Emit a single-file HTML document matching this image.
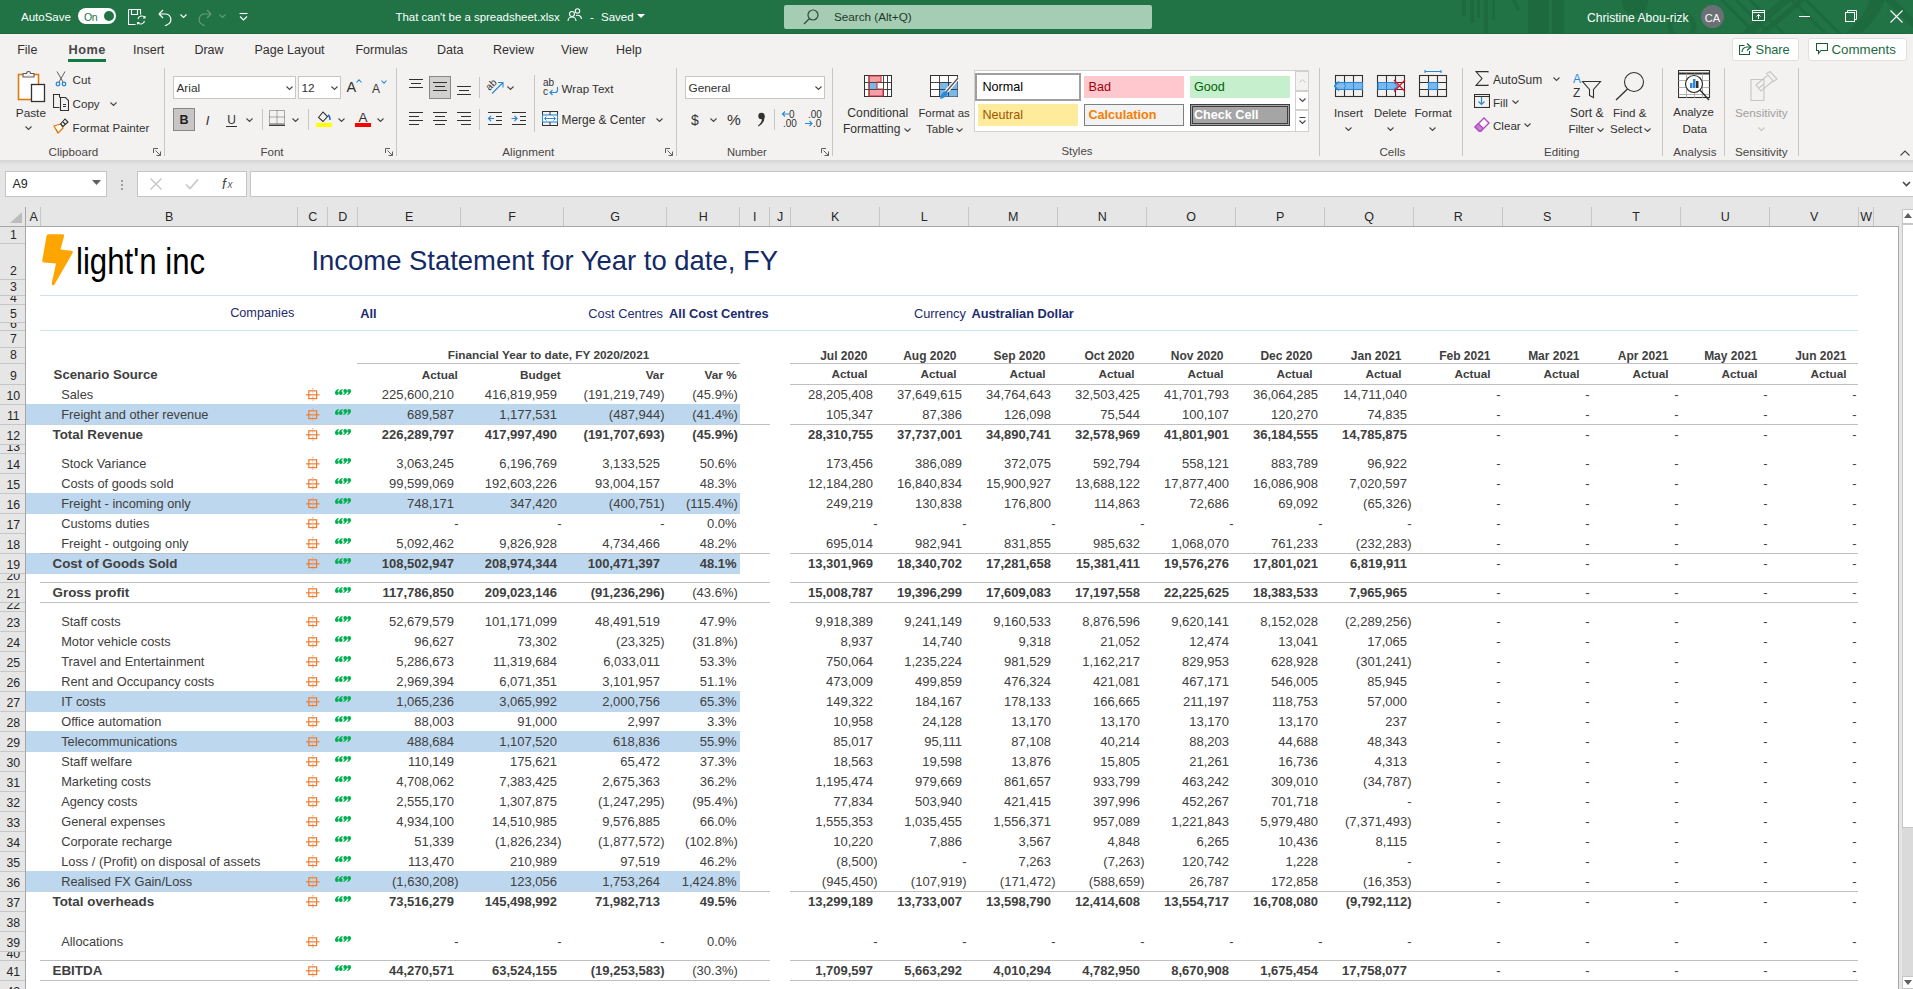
<!DOCTYPE html><html><head><meta charset="utf-8"><style>
html,body{margin:0;padding:0;width:1913px;height:989px;overflow:hidden;background:#fff;}
body{position:relative;font-family:"Liberation Sans",sans-serif;}
.t{position:absolute;white-space:nowrap;line-height:normal;}
.r{position:absolute;box-sizing:border-box;}
</style></head><body>
<div class="r" style="left:0px;top:0px;width:1913px;height:34px;background:#217346;"></div>
<div class="r" style="left:0px;top:33px;width:1913px;height:1px;background:#1b6a3d;"></div>
<svg class="r" style="left:1440px;top:0px" width="473" height="34" viewBox="0 0 473 34">
<g fill="#1e6a3f">
<rect x="22" y="0" width="4" height="16"/><rect x="30" y="0" width="4" height="23"/><rect x="37" y="0" width="3" height="18"/><rect x="44" y="0" width="4" height="33"/><rect x="52" y="0" width="3" height="20"/>
<path d="M72 0 L76 0 L80 10 L77 11Z"/>
<rect x="88" y="0" width="21" height="34"/><rect x="112" y="0" width="12" height="34"/>
<circle cx="195" cy="2" r="13"/>
<path d="M300 34 L340 0 L352 0 L312 34Z"/>
<path d="M318 34 L358 0 L366 0 L326 34Z"/>
<path d="M430 0 L445 0 A80 80 0 0 1 420 34 L404 34 A70 70 0 0 0 430 0Z"/>
<path d="M445 0 L455 0 L473 18 L473 28Z"/>
</g>
<circle cx="242" cy="26" r="12" fill="none" stroke="#1e6a3f" stroke-width="5"/>
<path d="M282 0 L316 34 M296 0 L330 34 M310 0 L344 34 M352 0 L386 34 M366 0 L400 34" stroke="#1e6a3f" stroke-width="3"/>
</svg>
<div class="t" style="top:10.59px;font-size:11.5px;color:#ffffff;left:21.00px;">AutoSave</div>
<div class="r" style="left:78px;top:8px;width:38px;height:16px;background:#fff;border-radius:8px;"></div>
<div class="t" style="top:11.00px;font-size:10.5px;color:#217346;left:84.00px;letter-spacing:-0.3px;">On</div>
<div class="r" style="left:104px;top:11px;width:10px;height:10px;background:#217346;border-radius:5px;"></div>
<svg class="r" style="left:128px;top:9px" width="18" height="17" viewBox="0 0 18 17"><g fill="none" stroke="#fff" stroke-width="1.1"><path d="M0.5 0.5h12v5M0.5 0.5v15h7"/><path d="M3.5 0.5v5h6v-5"/><path d="M10 10a4 4 0 0 1 7 -1.5M17 7v2h-2"/><path d="M16.5 12a4 4 0 0 1 -7 1.5M9.5 15.5v-2h2"/></g></svg>
<svg class="r" style="left:158px;top:9px" width="15" height="17" viewBox="0 0 15 17"><g fill="none" stroke="#fff" stroke-width="1.2"><path d="M1 5 L5 1 M1 5 L5 9 M1 5 H8 A5.5 5.5 0 0 1 9.5 15.5 L7 17"/></g></svg>
<svg class="r" style="left:180px;top:14px" width="7" height="5" viewBox="0 0 7 5"><path d="M0.5 0.5 L3.5 3.5 L6.5 0.5" fill="none" stroke="#fff" stroke-width="1.1"/></svg>
<svg class="r" style="left:197px;top:9px" width="15" height="17" viewBox="0 0 15 17"><g fill="none" stroke="#5c9c78" stroke-width="1.2"><path d="M14 5 L10 1 M14 5 L10 9 M14 5 H7 A5.5 5.5 0 0 0 5.5 15.5 L8 17"/></g></svg>
<svg class="r" style="left:219px;top:14px" width="7" height="5" viewBox="0 0 7 5"><path d="M0.5 0.5 L3.5 3.5 L6.5 0.5" fill="none" stroke="#5c9c78" stroke-width="1.1"/></svg>
<svg class="r" style="left:239px;top:12px" width="9" height="9" viewBox="0 0 9 9"><g fill="none" stroke="#fff" stroke-width="1.1"><path d="M0.5 1.5h8"/><path d="M1 4.5 L4.5 8 L8 4.5"/></g></svg>
<div class="t" style="top:10.64px;font-size:11.45px;color:#ffffff;left:395.50px;">That can&#x27;t be a spreadsheet.xlsx</div>
<svg class="r" style="left:567px;top:8px" width="15" height="13" viewBox="0 0 15 13"><g fill="none" stroke="#fff" stroke-width="1.1"><circle cx="5" cy="6" r="2.5"/><path d="M1 13 A4 4 0 0 1 9 13"/><circle cx="10.5" cy="3" r="2.2"/><path d="M9 7.5 A4 4 0 0 1 14.5 11"/></g></svg>
<div class="t" style="top:10.59px;font-size:11.5px;color:#ffffff;left:590.00px;">-</div>
<div class="t" style="top:10.59px;font-size:11.5px;color:#ffffff;left:601.00px;">Saved</div>
<svg class="r" style="left:637px;top:14px" width="8" height="5" viewBox="0 0 8 5"><path d="M0 0 L8 0 L4 4Z" fill="#fff"/></svg>
<div class="r" style="left:784px;top:5px;width:368px;height:24px;background:#a4cdb3;border-radius:2px;"></div>
<svg class="r" style="left:803px;top:9px" width="16" height="16" viewBox="0 0 16 16"><g fill="none" stroke="#2d4a39" stroke-width="1.2"><circle cx="10" cy="6" r="5"/><path d="M6.5 9.5 L1 15"/></g></svg>
<div class="t" style="top:9.91px;font-size:11.7px;color:#1f3a2a;left:834.00px;">Search (Alt+Q)</div>
<div class="t" style="top:10.55px;font-size:12.1px;color:#ffffff;left:1587.00px;">Christine Abou-rizk</div>
<div class="r" style="left:1701px;top:5px;width:23px;height:23px;background:#6b7074;border-radius:12px;"></div>
<div class="t" style="top:11.54px;font-size:11px;color:#ffffff;left:1712.50px;transform:translateX(-50%);">CA</div>
<svg class="r" style="left:1752px;top:10px" width="13" height="11" viewBox="0 0 13 11"><g fill="none" stroke="#fff" stroke-width="1"><rect x="0.5" y="0.5" width="12" height="10"/><path d="M0.5 2.5h12"/><path d="M6.5 9V4.5M4.5 6.5L6.5 4.5L8.5 6.5"/></g></svg>
<div class="r" style="left:1799px;top:16px;width:11px;height:1px;background:#fff;"></div>
<svg class="r" style="left:1845px;top:10px" width="12" height="12" viewBox="0 0 12 12"><g fill="none" stroke="#fff" stroke-width="1"><rect x="0.5" y="2.5" width="9" height="9"/><path d="M2.5 2.5V0.5h9v9h-2"/></g></svg>
<svg class="r" style="left:1890px;top:10px" width="13" height="13" viewBox="0 0 13 13"><g stroke="#fff" stroke-width="1.1"><path d="M0.5 0.5L12.5 12.5M12.5 0.5L0.5 12.5"/></g></svg>
<div class="r" style="left:0px;top:34px;width:1913px;height:126px;background:#f3f2f1;"></div>
<div class="t" style="top:43.19px;font-size:12.5px;color:#323130;left:17.20px;">File</div>
<div class="t" style="top:43.19px;font-size:12.5px;color:#323130;left:133.00px;">Insert</div>
<div class="t" style="top:43.19px;font-size:12.5px;color:#323130;left:194.40px;">Draw</div>
<div class="t" style="top:43.19px;font-size:12.5px;color:#323130;left:254.40px;">Page Layout</div>
<div class="t" style="top:43.19px;font-size:12.5px;color:#323130;left:355.40px;">Formulas</div>
<div class="t" style="top:43.19px;font-size:12.5px;color:#323130;left:437.00px;">Data</div>
<div class="t" style="top:43.19px;font-size:12.5px;color:#323130;left:493.00px;">Review</div>
<div class="t" style="top:43.19px;font-size:12.5px;color:#323130;left:561.00px;">View</div>
<div class="t" style="top:43.19px;font-size:12.5px;color:#323130;left:616.00px;">Help</div>
<div class="t" style="top:42.51px;font-size:12.7px;color:#484848;font-weight:bold;left:68.50px;letter-spacing:0.5px;">Home</div>
<div class="r" style="left:68px;top:59px;width:38px;height:3px;background:#107c41;"></div>
<div class="r" style="left:1732px;top:38px;width:67px;height:23px;background:#fff;border:1px solid #e1dfdd;border-radius:3px;"></div>
<svg class="r" style="left:1739px;top:42px" width="13" height="13" viewBox="0 0 13 13"><g fill="none" stroke="#185c37" stroke-width="1.1"><path d="M8 1.5 L12 5 L8 8.5"/><path d="M12 5 H8 A5 5 0 0 0 3 10"/><path d="M5.5 3.5 H0.5 V12.5 H10.5 V9"/></g></svg>
<div class="t" style="top:42.42px;font-size:12.8px;color:#1b6b40;left:1755.60px;">Share</div>
<div class="r" style="left:1808px;top:38px;width:99px;height:23px;background:#fff;border:1px solid #e1dfdd;border-radius:3px;"></div>
<svg class="r" style="left:1816px;top:43px" width="12" height="12" viewBox="0 0 12 12"><path d="M0.5 0.5H11.5V7.5H5L2.5 10.5V7.5H0.5Z" fill="none" stroke="#185c37" stroke-width="1.1"/></svg>
<div class="t" style="top:41.96px;font-size:13.3px;color:#1b6b40;left:1831.50px;">Comments</div>
<svg class="r" style="left:17px;top:71px" width="29" height="32" viewBox="0 0 29 32"><rect x="1.5" y="3.5" width="20" height="25" fill="#fff" stroke="#e07b10" stroke-width="1.6"/>
<path d="M6 6 V2.5 H9.5 A2 2 0 0 1 13.5 2.5 H17 V6Z" fill="#f3f2f1" stroke="#605e5c" stroke-width="1.1"/>
<rect x="14.5" y="13.5" width="13" height="17" fill="#fff" stroke="#323130" stroke-width="1.3"/></svg>
<div class="t" style="top:106.32px;font-size:11.8px;color:#323130;left:15.80px;">Paste</div>
<svg class="r" style="left:24.5px;top:126px" width="7" height="4.5" viewBox="0 0 7 4.5"><path d="M0.5 0.5L3.5 3.5L6.5 0.5" fill="none" stroke="#484644" stroke-width="1.1"/></svg>
<svg class="r" style="left:55px;top:71px" width="12" height="16" viewBox="0 0 12 16"><g fill="none" stroke="#605e5c" stroke-width="1"><path d="M2 0.5 L8 11 M10 0.5 L4 11"/></g><g fill="none" stroke="#2b88d8" stroke-width="1.3"><circle cx="3" cy="13" r="1.8"/><circle cx="9" cy="13" r="1.8"/></g></svg>
<div class="t" style="top:73.30px;font-size:11.6px;color:#323130;left:72.60px;">Cut</div>
<svg class="r" style="left:53px;top:94px" width="16" height="17" viewBox="0 0 16 17"><g fill="none" stroke="#323130" stroke-width="1.1"><path d="M6.5 3.5V0.5H0.5V13.5H6.5"/><path d="M7.5 3.5H12.5L15.5 6.5V16.5H7.5Z"/><path d="M10 10.5H13M10 12.5H13"/></g></svg>
<div class="t" style="top:97.00px;font-size:11.6px;color:#323130;left:72.60px;">Copy</div>
<svg class="r" style="left:110.0px;top:101.5px" width="7" height="4.5" viewBox="0 0 7 4.5"><path d="M0.5 0.5L3.5 3.5L6.5 0.5" fill="none" stroke="#484644" stroke-width="1.1"/></svg>
<svg class="r" style="left:53px;top:118px" width="16" height="16" viewBox="0 0 16 16"><path d="M1 8 L8 6 L10 10 L5 15Z" fill="#fff" stroke="#e07b10" stroke-width="1.3"/><path d="M5 15 L3 11" stroke="#e07b10" stroke-width="1.1"/><g fill="none" stroke="#323130" stroke-width="1.1"><path d="M7.5 6 L12 1 L15 4 L10 8.5Z"/><path d="M10 4 L12.5 6.5"/></g></svg>
<div class="t" style="top:121.00px;font-size:11.6px;color:#323130;left:72.60px;">Format Painter</div>
<div class="t" style="top:144.80px;font-size:11.6px;color:#484644;left:48.60px;">Clipboard</div>
<svg class="r" style="left:153px;top:148px" width="9" height="9" viewBox="0 0 9 9"><g fill="none" stroke="#605e5c" stroke-width="1"><path d="M0.5 5V0.5H5"/><path d="M2.5 2.5L7.5 7.5M3.5 7.5H7.5V3.5"/></g></svg>
<div class="r" style="left:164px;top:68px;width:1px;height:88px;background:#c8c6c4;"></div>
<div class="r" style="left:173px;top:76px;width:123px;height:23px;background:#fff;border:1px solid #c8c6c4;"></div>
<div class="t" style="top:81.32px;font-size:11.8px;color:#323130;left:176.50px;">Arial</div>
<svg class="r" style="left:285.5px;top:86px" width="7" height="4.5" viewBox="0 0 7 4.5"><path d="M0.5 0.5L3.5 3.5L6.5 0.5" fill="none" stroke="#484644" stroke-width="1.1"/></svg>
<div class="r" style="left:298px;top:76px;width:43px;height:23px;background:#fff;border:1px solid #c8c6c4;"></div>
<div class="t" style="top:81.32px;font-size:11.8px;color:#323130;left:301.50px;">12</div>
<svg class="r" style="left:330.5px;top:86px" width="7" height="4.5" viewBox="0 0 7 4.5"><path d="M0.5 0.5L3.5 3.5L6.5 0.5" fill="none" stroke="#484644" stroke-width="1.1"/></svg>
<div class="t" style="top:79.38px;font-size:14.5px;color:#323130;left:346.50px;">A</div>
<svg class="r" style="left:356px;top:79px" width="6" height="4" viewBox="0 0 6 4"><path d="M0.5 3.5L3 0.8L5.5 3.5" fill="none" stroke="#2b88d8" stroke-width="1.1"/></svg>
<div class="t" style="top:81.64px;font-size:12px;color:#323130;left:372.00px;">A</div>
<svg class="r" style="left:381px;top:80px" width="6" height="4" viewBox="0 0 6 4"><path d="M0.5 0.5L3 3.2L5.5 0.5" fill="none" stroke="#2b88d8" stroke-width="1.1"/></svg>
<div class="r" style="left:173px;top:108px;width:22px;height:23px;background:#c8c6c4;border:1px solid #8a8886;"></div>
<div class="t" style="top:113.19px;font-size:12.5px;color:#201f1e;font-weight:bold;left:184.00px;transform:translateX(-50%);">B</div>
<div class="t" style="top:112.73px;font-size:13px;color:#323130;left:207.50px;transform:translateX(-50%);font-style:italic;font-family:"Liberation Serif",serif;">I</div>
<div class="t" style="top:112.64px;font-size:12px;color:#323130;left:231.50px;transform:translateX(-50%);">U</div>
<div class="r" style="left:226px;top:125.5px;width:11px;height:1px;background:#323130;"></div>
<svg class="r" style="left:245.8px;top:117.5px" width="7" height="4.5" viewBox="0 0 7 4.5"><path d="M0.5 0.5L3.5 3.5L6.5 0.5" fill="none" stroke="#484644" stroke-width="1.1"/></svg>
<div class="r" style="left:262px;top:109px;width:1px;height:21px;background:#c8c6c4;"></div>
<svg class="r" style="left:269px;top:110px" width="17" height="16" viewBox="0 0 17 16"><g fill="none" stroke="#605e5c" stroke-width="1" stroke-dasharray="1 1"><rect x="0.5" y="0.5" width="15" height="13"/><path d="M8 0.5V13.5M0.5 7H15.5"/></g><path d="M0 15.2H16" stroke="#201f1e" stroke-width="1.3"/></svg>
<svg class="r" style="left:292.0px;top:117.5px" width="7" height="4.5" viewBox="0 0 7 4.5"><path d="M0.5 0.5L3.5 3.5L6.5 0.5" fill="none" stroke="#484644" stroke-width="1.1"/></svg>
<div class="r" style="left:308px;top:109px;width:1px;height:21px;background:#c8c6c4;"></div>
<svg class="r" style="left:316px;top:110px" width="17" height="17" viewBox="0 0 17 17"><path d="M2.5 7.5 L7 2 L11.5 6.5 L7 11.5Z" fill="none" stroke="#323130" stroke-width="1.1"/><path d="M12 5 Q14 6 14 10" fill="none" stroke="#0f6cbd" stroke-width="1.4"/><rect x="0" y="13" width="16" height="4" fill="#ffff00"/></svg>
<svg class="r" style="left:338.0px;top:117.5px" width="7" height="4.5" viewBox="0 0 7 4.5"><path d="M0.5 0.5L3.5 3.5L6.5 0.5" fill="none" stroke="#484644" stroke-width="1.1"/></svg>
<div class="t" style="top:109.78px;font-size:13.5px;color:#323130;left:363.00px;transform:translateX(-50%);">A</div>
<div class="r" style="left:355px;top:123px;width:16px;height:4px;background:#ff0000;"></div>
<svg class="r" style="left:377.0px;top:117.5px" width="7" height="4.5" viewBox="0 0 7 4.5"><path d="M0.5 0.5L3.5 3.5L6.5 0.5" fill="none" stroke="#484644" stroke-width="1.1"/></svg>
<div class="t" style="top:144.80px;font-size:11.6px;color:#484644;left:260.40px;">Font</div>
<svg class="r" style="left:385px;top:148px" width="9" height="9" viewBox="0 0 9 9"><g fill="none" stroke="#605e5c" stroke-width="1"><path d="M0.5 5V0.5H5"/><path d="M2.5 2.5L7.5 7.5M3.5 7.5H7.5V3.5"/></g></svg>
<div class="r" style="left:396px;top:68px;width:1px;height:88px;background:#c8c6c4;"></div>
<div class="r" style="left:409px;top:79px;width:14px;height:1px;background:#323130;"></div>
<div class="r" style="left:411px;top:83px;width:10px;height:1px;background:#323130;"></div>
<div class="r" style="left:409px;top:87px;width:14px;height:1px;background:#323130;"></div>
<div class="r" style="left:429px;top:76px;width:22px;height:23px;background:#d2d0ce;border:1px solid #8a8886;"></div>
<div class="r" style="left:433px;top:82px;width:14px;height:1px;background:#323130;"></div>
<div class="r" style="left:435px;top:86px;width:10px;height:1px;background:#323130;"></div>
<div class="r" style="left:433px;top:90px;width:14px;height:1px;background:#323130;"></div>
<div class="r" style="left:457px;top:86px;width:14px;height:1px;background:#323130;"></div>
<div class="r" style="left:459px;top:90px;width:10px;height:1px;background:#323130;"></div>
<div class="r" style="left:457px;top:94px;width:14px;height:1px;background:#323130;"></div>
<div class="r" style="left:479px;top:77px;width:1px;height:21px;background:#c8c6c4;"></div>
<svg class="r" style="left:486px;top:78px" width="19" height="17" viewBox="0 0 19 17"><text x="0" y="0" font-family="Liberation Sans" font-size="10" fill="#323130" transform="translate(3.5 13) rotate(-45)">ab</text><path d="M6 15.5 L16.5 5 M12 4.5 H17 V9.5" fill="none" stroke="#2b88d8" stroke-width="1.1"/></svg>
<svg class="r" style="left:507.0px;top:85.5px" width="7" height="4.5" viewBox="0 0 7 4.5"><path d="M0.5 0.5L3.5 3.5L6.5 0.5" fill="none" stroke="#484644" stroke-width="1.1"/></svg>
<div class="r" style="left:409px;top:112px;width:14px;height:1px;background:#323130;"></div>
<div class="r" style="left:409px;top:116px;width:10px;height:1px;background:#323130;"></div>
<div class="r" style="left:409px;top:120px;width:14px;height:1px;background:#323130;"></div>
<div class="r" style="left:409px;top:124px;width:10px;height:1px;background:#323130;"></div>
<div class="r" style="left:433px;top:112px;width:14px;height:1px;background:#323130;"></div>
<div class="r" style="left:435px;top:116px;width:10px;height:1px;background:#323130;"></div>
<div class="r" style="left:433px;top:120px;width:14px;height:1px;background:#323130;"></div>
<div class="r" style="left:435px;top:124px;width:10px;height:1px;background:#323130;"></div>
<div class="r" style="left:457px;top:112px;width:14px;height:1px;background:#323130;"></div>
<div class="r" style="left:461px;top:116px;width:10px;height:1px;background:#323130;"></div>
<div class="r" style="left:457px;top:120px;width:14px;height:1px;background:#323130;"></div>
<div class="r" style="left:461px;top:124px;width:10px;height:1px;background:#323130;"></div>
<div class="r" style="left:479px;top:109px;width:1px;height:21px;background:#c8c6c4;"></div>
<div class="r" style="left:488px;top:112px;width:14px;height:1px;background:#323130;"></div>
<div class="r" style="left:496px;top:116px;width:6px;height:1px;background:#323130;"></div>
<div class="r" style="left:496px;top:120px;width:6px;height:1px;background:#323130;"></div>
<div class="r" style="left:488px;top:124px;width:14px;height:1px;background:#323130;"></div>
<svg class="r" style="left:487px;top:114px" width="8" height="9" viewBox="0 0 8 9"><path d="M7 4.5H1.5M4 2L1.5 4.5L4 7" fill="none" stroke="#2b88d8" stroke-width="1.2"/></svg>
<div class="r" style="left:512px;top:112px;width:14px;height:1px;background:#323130;"></div>
<div class="r" style="left:520px;top:116px;width:6px;height:1px;background:#323130;"></div>
<div class="r" style="left:520px;top:120px;width:6px;height:1px;background:#323130;"></div>
<div class="r" style="left:512px;top:124px;width:14px;height:1px;background:#323130;"></div>
<svg class="r" style="left:511px;top:114px" width="8" height="9" viewBox="0 0 8 9"><path d="M0.5 4.5H6M3.5 2L6 4.5L3.5 7" fill="none" stroke="#2b88d8" stroke-width="1.2"/></svg>
<div class="r" style="left:534px;top:75px;width:1px;height:57px;background:#c8c6c4;"></div>
<svg class="r" style="left:543px;top:78px" width="17" height="18" viewBox="0 0 17 18"><text x="0" y="8" font-family="Liberation Sans" font-size="10" fill="#323130">ab</text><text x="0" y="17" font-family="Liberation Sans" font-size="10" fill="#323130">c</text><path d="M14.5 9 V12 A2.5 2.5 0 0 1 12 14.5 H7 M9.5 12 L7 14.5 L9.5 17" fill="none" stroke="#2b88d8" stroke-width="1.2"/></svg>
<div class="t" style="top:82.00px;font-size:11.6px;color:#323130;left:561.60px;">Wrap Text</div>
<svg class="r" style="left:542px;top:111px" width="16" height="15" viewBox="0 0 16 15"><rect x="0.5" y="0.5" width="15" height="14" fill="none" stroke="#323130" stroke-width="1"/><rect x="0.5" y="4" width="15" height="7" fill="#fff" stroke="#2b88d8" stroke-width="1.1"/><path d="M2.5 7.5H13.5M4.5 5.5L2.5 7.5L4.5 9.5M11.5 5.5L13.5 7.5L11.5 9.5" fill="none" stroke="#2b88d8" stroke-width="1"/><path d="M8 0.5V4M8 11V14.5" stroke="#323130"/></svg>
<div class="t" style="top:113.23px;font-size:11.9px;color:#323130;left:561.60px;">Merge &amp; Center</div>
<svg class="r" style="left:656.0px;top:117.5px" width="7" height="4.5" viewBox="0 0 7 4.5"><path d="M0.5 0.5L3.5 3.5L6.5 0.5" fill="none" stroke="#484644" stroke-width="1.1"/></svg>
<div class="t" style="top:144.71px;font-size:11.7px;color:#484644;left:502.30px;">Alignment</div>
<svg class="r" style="left:665px;top:148px" width="9" height="9" viewBox="0 0 9 9"><g fill="none" stroke="#605e5c" stroke-width="1"><path d="M0.5 5V0.5H5"/><path d="M2.5 2.5L7.5 7.5M3.5 7.5H7.5V3.5"/></g></svg>
<div class="r" style="left:676px;top:68px;width:1px;height:88px;background:#c8c6c4;"></div>
<div class="r" style="left:685px;top:76px;width:140px;height:23px;background:#fff;border:1px solid #c8c6c4;"></div>
<div class="t" style="top:81.32px;font-size:11.8px;color:#323130;left:688.50px;">General</div>
<svg class="r" style="left:814.5px;top:86px" width="7" height="4.5" viewBox="0 0 7 4.5"><path d="M0.5 0.5L3.5 3.5L6.5 0.5" fill="none" stroke="#484644" stroke-width="1.1"/></svg>
<div class="t" style="top:112.33px;font-size:14px;color:#323130;left:691.00px;">$</div>
<svg class="r" style="left:710.0px;top:117.5px" width="7" height="4.5" viewBox="0 0 7 4.5"><path d="M0.5 0.5L3.5 3.5L6.5 0.5" fill="none" stroke="#484644" stroke-width="1.1"/></svg>
<div class="t" style="top:110.97px;font-size:15.5px;color:#323130;left:727.00px;">%</div>
<svg class="r" style="left:757px;top:112px" width="9" height="15" viewBox="0 0 9 15"><circle cx="4.5" cy="4" r="3.2" fill="#323130"/><path d="M7.6 4 Q8 11 1.5 14.5 L1 13.5 Q5 10.5 5 6.5Z" fill="#323130"/></svg>
<div class="r" style="left:774px;top:109px;width:1px;height:21px;background:#c8c6c4;"></div>
<svg class="r" style="left:781px;top:109px" width="17" height="19" viewBox="0 0 17 19"><text x="8" y="9" font-family="Liberation Sans" font-size="10" fill="#323130">0</text><text x="2" y="18" font-family="Liberation Sans" font-size="10" fill="#323130">.00</text><path d="M8 5H1.5M4 2.5L1.5 5L4 7.5" fill="none" stroke="#2b88d8" stroke-width="1.1"/></svg>
<svg class="r" style="left:804px;top:109px" width="19" height="19" viewBox="0 0 19 19"><text x="4" y="9" font-family="Liberation Sans" font-size="10" fill="#323130">.00</text><text x="9" y="18" font-family="Liberation Sans" font-size="10" fill="#323130">.0</text><path d="M1 14.5H8M5.5 12L8 14.5L5.5 17" fill="none" stroke="#2b88d8" stroke-width="1.1"/></svg>
<div class="t" style="top:145.86px;font-size:11.2px;color:#484644;left:727.00px;">Number</div>
<svg class="r" style="left:821px;top:148px" width="9" height="9" viewBox="0 0 9 9"><g fill="none" stroke="#605e5c" stroke-width="1"><path d="M0.5 5V0.5H5"/><path d="M2.5 2.5L7.5 7.5M3.5 7.5H7.5V3.5"/></g></svg>
<div class="r" style="left:832px;top:68px;width:1px;height:88px;background:#c8c6c4;"></div>
<svg class="r" style="left:864px;top:75px" width="28" height="22" viewBox="0 0 28 22"><rect x="0.5" y="0.5" width="27" height="21" fill="#fff" stroke="#323130" stroke-width="1"/>
<rect x="5" y="1" width="12" height="6" fill="#f4a0a8"/><rect x="5" y="8" width="8" height="6" fill="#7ab8ea"/><rect x="5" y="15" width="14" height="6" fill="#f4a0a8"/>
<path d="M0.5 7.5H27.5M0.5 14.5H27.5M5 0.5V21.5M19.5 0.5V21.5M23.5 0.5V21.5" stroke="#323130" stroke-width="0.9"/>
<path d="M5 1H17V7H13V14H19V21H5Z" fill="none" stroke="#d13438" stroke-width="1.1"/></svg>
<div class="t" style="top:106.46px;font-size:12.2px;color:#323130;left:847.30px;">Conditional</div>
<div class="t" style="top:121.94px;font-size:12.0px;color:#323130;left:843.00px;">Formatting</div>
<svg class="r" style="left:903.5px;top:127.5px" width="7" height="4.5" viewBox="0 0 7 4.5"><path d="M0.5 0.5L3.5 3.5L6.5 0.5" fill="none" stroke="#484644" stroke-width="1.1"/></svg>
<svg class="r" style="left:930px;top:75px" width="30" height="25" viewBox="0 0 30 25"><rect x="0.5" y="0.5" width="27" height="21" fill="#fff" stroke="#323130" stroke-width="1"/>
<rect x="10" y="7" width="17.5" height="14.5" fill="#7ab8ea"/>
<path d="M0.5 7.5H27.5M0.5 14.5H27.5M9.5 0.5V21.5M18.5 0.5V21.5" stroke="#323130" stroke-width="0.9"/>
<path d="M28 3 L16 17" stroke="#fff" stroke-width="4"/><path d="M28 3 L16 17" stroke="#605e5c" stroke-width="1.5"/>
<path d="M16 16 Q11 17 10 24 Q16 23 18 18Z" fill="#2b88d8"/></svg>
<div class="t" style="top:107.18px;font-size:11.4px;color:#323130;left:918.40px;">Format as</div>
<div class="t" style="top:122.30px;font-size:11.6px;color:#323130;left:926.00px;">Table</div>
<svg class="r" style="left:955.5px;top:127.5px" width="7" height="4.5" viewBox="0 0 7 4.5"><path d="M0.5 0.5L3.5 3.5L6.5 0.5" fill="none" stroke="#484644" stroke-width="1.1"/></svg>
<div class="r" style="left:974px;top:70px;width:335px;height:62px;background:#fff;border:1px solid #d2d0ce;"></div>
<div class="r" style="left:975px;top:73px;width:106px;height:28px;background:#fff;border:2px solid #a19f9d;"></div>
<div class="t" style="top:79.60px;font-size:12.6px;color:#000000;left:982.50px;">Normal</div>
<div class="r" style="left:1084px;top:76px;width:100px;height:22px;background:#ffc7ce;"></div>
<div class="t" style="top:79.60px;font-size:12.6px;color:#9c0006;left:1088.50px;">Bad</div>
<div class="r" style="left:1190px;top:76px;width:100px;height:22px;background:#c6efce;"></div>
<div class="t" style="top:79.60px;font-size:12.6px;color:#006100;left:1194.00px;">Good</div>
<div class="r" style="left:978px;top:104px;width:100px;height:22px;background:#ffeb9c;"></div>
<div class="t" style="top:107.60px;font-size:12.6px;color:#9c5700;left:982.50px;">Neutral</div>
<div class="r" style="left:1084px;top:104px;width:100px;height:22px;background:#f2f2f2;border:1px solid #7f7f7f;"></div>
<div class="t" style="top:107.60px;font-size:12.6px;color:#fa7d00;font-weight:bold;left:1088.50px;">Calculation</div>
<div class="r" style="left:1190px;top:104px;width:100px;height:22px;background:#a5a5a5;border:3px double #3f3f3f;"></div>
<div class="t" style="top:107.60px;font-size:12.6px;color:#ffffff;font-weight:bold;left:1194.00px;">Check Cell</div>
<div class="r" style="left:1295px;top:71px;width:14px;height:20px;background:#f3f2f1;border:1px solid #d2d0ce;"></div>
<svg class="r" style="left:1299px;top:79px" width="7" height="4" viewBox="0 0 7 4"><path d="M0.5 3.5L3.5 0.5L6.5 3.5" fill="none" stroke="#c8c6c4" stroke-width="1"/></svg>
<div class="r" style="left:1295px;top:91px;width:14px;height:19px;background:#fff;border:1px solid #d2d0ce;"></div>
<svg class="r" style="left:1298.5px;top:98px" width="7" height="4.5" viewBox="0 0 7 4.5"><path d="M0.5 0.5L3.5 3.5L6.5 0.5" fill="none" stroke="#484644" stroke-width="1.1"/></svg>
<div class="r" style="left:1295px;top:110px;width:14px;height:22px;background:#fff;border:1px solid #d2d0ce;"></div>
<svg class="r" style="left:1298.5px;top:117px" width="7" height="8" viewBox="0 0 7 8"><path d="M0.5 0.5H6.5M0.5 3.5L3.5 6.5L6.5 3.5" fill="none" stroke="#484644" stroke-width="1.1"/></svg>
<div class="t" style="top:144.98px;font-size:11.4px;color:#484644;left:1061.40px;">Styles</div>
<div class="r" style="left:1319px;top:68px;width:1px;height:88px;background:#c8c6c4;"></div>
<svg class="r" style="left:1334px;top:70px" width="30" height="28" viewBox="0 0 30 28"><g fill="none" stroke="#323130" stroke-width="1.1"><rect x="1.5" y="5.5" width="27" height="21"/><path d="M1.5 12.5H28.5M1.5 19.5H28.5M10.5 5.5V26.5M19.5 5.5V26.5"/></g><rect x="2" y="12.5" width="26.5" height="7" fill="#7ab8ea" stroke="#2b88d8" stroke-width="1.1"/><path d="M10.5 12.5V19.5M19.5 12.5V19.5" stroke="#2b88d8"/><path d="M0.5 16H12M5 11.5L0.5 16L5 20.5" fill="none" stroke="#2b88d8" stroke-width="1.4"/><path d="M2 16H11" stroke="#fff" stroke-width="0.8"/></svg>
<div class="t" style="top:106.30px;font-size:11.6px;color:#323130;left:1334.00px;">Insert</div>
<svg class="r" style="left:1345.0px;top:126.5px" width="7" height="4.5" viewBox="0 0 7 4.5"><path d="M0.5 0.5L3.5 3.5L6.5 0.5" fill="none" stroke="#484644" stroke-width="1.1"/></svg>
<svg class="r" style="left:1376px;top:70px" width="30" height="28" viewBox="0 0 30 28"><g fill="none" stroke="#323130" stroke-width="1.1"><rect x="1.5" y="5.5" width="27" height="21"/><path d="M1.5 12.5H28.5M1.5 19.5H28.5M10.5 5.5V26.5M19.5 5.5V26.5"/></g><path d="M2 12.5H18L22 16L18 19.5H2Z" fill="#7ab8ea" stroke="#2b88d8" stroke-width="1.1"/><path d="M10.5 12.5V19.5" stroke="#2b88d8"/><path d="M18 10 L29 21.5 M29 10 L18 21.5" stroke="#e81123" stroke-width="1.2"/></svg>
<div class="t" style="top:106.57px;font-size:11.3px;color:#323130;left:1374.00px;">Delete</div>
<svg class="r" style="left:1387.0px;top:126.5px" width="7" height="4.5" viewBox="0 0 7 4.5"><path d="M0.5 0.5L3.5 3.5L6.5 0.5" fill="none" stroke="#484644" stroke-width="1.1"/></svg>
<svg class="r" style="left:1418px;top:70px" width="30" height="28" viewBox="0 0 30 28"><g fill="none" stroke="#323130" stroke-width="1.1"><rect x="1.5" y="5.5" width="27" height="21"/><path d="M1.5 12.5H28.5M1.5 19.5H28.5M10.5 5.5V26.5M19.5 5.5V26.5"/></g><rect x="10.5" y="12.5" width="9" height="7" fill="#7ab8ea" stroke="#2b88d8" stroke-width="1.1"/><path d="M7 1.5H23M7 0V3M23 0V3" stroke="#2b88d8" stroke-width="1.1"/></svg>
<div class="t" style="top:106.12px;font-size:11.8px;color:#323130;left:1414.40px;">Format</div>
<svg class="r" style="left:1429.0px;top:126.5px" width="7" height="4.5" viewBox="0 0 7 4.5"><path d="M0.5 0.5L3.5 3.5L6.5 0.5" fill="none" stroke="#484644" stroke-width="1.1"/></svg>
<div class="t" style="top:144.80px;font-size:11.6px;color:#484644;left:1379.50px;">Cells</div>
<div class="r" style="left:1462px;top:68px;width:1px;height:88px;background:#c8c6c4;"></div>
<svg class="r" style="left:1475px;top:71px" width="14" height="15" viewBox="0 0 14 15"><path d="M13 1.5V0.6H1L7 7.5L1 14.4H13V13.5" fill="none" stroke="#323130" stroke-width="1.1"/></svg>
<div class="t" style="top:72.64px;font-size:12.0px;color:#323130;left:1492.90px;">AutoSum</div>
<svg class="r" style="left:1552.9px;top:77px" width="7" height="4.5" viewBox="0 0 7 4.5"><path d="M0.5 0.5L3.5 3.5L6.5 0.5" fill="none" stroke="#484644" stroke-width="1.1"/></svg>
<svg class="r" style="left:1474px;top:94px" width="16" height="14" viewBox="0 0 16 14"><rect x="0.5" y="0.5" width="15" height="13" fill="none" stroke="#323130" stroke-width="1.1"/><path d="M0.5 2.5H15.5" stroke="#323130" stroke-width="1"/><path d="M7.5 3V10.5M4.5 7.5L7.5 10.5L10.5 7.5" fill="none" stroke="#2b88d8" stroke-width="1.2"/></svg>
<div class="t" style="top:95.50px;font-size:11.6px;color:#323130;left:1493.00px;">Fill</div>
<svg class="r" style="left:1511.5px;top:99.5px" width="7" height="4.5" viewBox="0 0 7 4.5"><path d="M0.5 0.5L3.5 3.5L6.5 0.5" fill="none" stroke="#484644" stroke-width="1.1"/></svg>
<svg class="r" style="left:1474px;top:116px" width="16" height="16" viewBox="0 0 16 16"><path d="M1 11 L10 2 L15 7 L6 16Z" fill="#fff" stroke="#b146c2" stroke-width="1.3"/><path d="M1 11L4.5 7.5L9.5 12.5L6 16Z" fill="#c77fd2" stroke="#b146c2" stroke-width="1.1"/></svg>
<div class="t" style="top:119.00px;font-size:11.6px;color:#323130;left:1493.00px;">Clear</div>
<svg class="r" style="left:1523.5px;top:122.5px" width="7" height="4.5" viewBox="0 0 7 4.5"><path d="M0.5 0.5L3.5 3.5L6.5 0.5" fill="none" stroke="#484644" stroke-width="1.1"/></svg>
<svg class="r" style="left:1572px;top:72px" width="30" height="28" viewBox="0 0 30 28"><text x="1" y="11" font-family="Liberation Sans" font-size="12" fill="#2b88d8">A</text><text x="1" y="25" font-family="Liberation Sans" font-size="12" fill="#323130">Z</text><path d="M10.5 9.5H28.5L21.5 17.5V25.5L17.5 23.5V17.5Z" fill="none" stroke="#323130" stroke-width="1.1"/></svg>
<div class="t" style="top:105.85px;font-size:12.1px;color:#323130;left:1570.00px;">Sort &amp;</div>
<div class="t" style="top:122.00px;font-size:11.6px;color:#323130;left:1568.40px;">Filter</div>
<svg class="r" style="left:1596.5px;top:127.5px" width="7" height="4.5" viewBox="0 0 7 4.5"><path d="M0.5 0.5L3.5 3.5L6.5 0.5" fill="none" stroke="#484644" stroke-width="1.1"/></svg>
<svg class="r" style="left:1615px;top:71px" width="31" height="30" viewBox="0 0 31 30"><circle cx="19" cy="11" r="9.5" fill="none" stroke="#323130" stroke-width="1.1"/><path d="M12.5 18 L1 29" stroke="#323130" stroke-width="1.3"/></svg>
<div class="t" style="top:106.30px;font-size:11.6px;color:#323130;left:1613.00px;">Find &amp;</div>
<div class="t" style="top:122.00px;font-size:11.6px;color:#323130;left:1610.00px;">Select</div>
<svg class="r" style="left:1643.5px;top:127.5px" width="7" height="4.5" viewBox="0 0 7 4.5"><path d="M0.5 0.5L3.5 3.5L6.5 0.5" fill="none" stroke="#484644" stroke-width="1.1"/></svg>
<div class="t" style="top:144.80px;font-size:11.6px;color:#484644;left:1544.00px;">Editing</div>
<div class="r" style="left:1662px;top:68px;width:1px;height:88px;background:#c8c6c4;"></div>
<svg class="r" style="left:1678px;top:70px" width="33" height="32" viewBox="0 0 33 32"><rect x="0.5" y="0.5" width="31" height="27" fill="#fff" stroke="#323130" stroke-width="1.1"/>
<path d="M0.5 3.5H31.5" stroke="#323130" stroke-width="2"/>
<path d="M0.5 10.5H31.5M0.5 17.5H31.5M0.5 24.5H31.5M8.5 3.5V28M16.5 3.5V28M24.5 3.5V28" stroke="#a19f9d" stroke-width="0.8"/>
<circle cx="16" cy="14" r="8.5" fill="#fff" stroke="#323130" stroke-width="1.2"/>
<rect x="12" y="13" width="2.5" height="5" fill="#2b88d8"/><rect x="15" y="9" width="2.5" height="9" fill="#2b88d8"/><rect x="18" y="11" width="2.5" height="7" fill="#323130"/>
<path d="M22 20 L31 30" stroke="#323130" stroke-width="1.5"/></svg>
<div class="t" style="top:106.48px;font-size:11.4px;color:#323130;left:1673.30px;">Analyze</div>
<div class="t" style="top:122.30px;font-size:11.6px;color:#323130;left:1682.40px;">Data</div>
<div class="t" style="top:144.80px;font-size:11.6px;color:#484644;left:1673.30px;">Analysis</div>
<div class="r" style="left:1724px;top:68px;width:1px;height:88px;background:#c8c6c4;"></div>
<svg class="r" style="left:1750px;top:71px" width="28" height="30" viewBox="0 0 28 30"><g fill="none" stroke="#c8c6c4" stroke-width="1.1"><path d="M1 8.5H14V29.5H1Z"/><path d="M6 14 L18 4 L23 10 L11 20Z"/><path d="M16 3 L20 0.5 L27 8 L23 11"/><path d="M9 17 L14 13"/></g></svg>
<div class="t" style="top:106.21px;font-size:11.7px;color:#a19f9d;left:1735.00px;">Sensitivity</div>
<svg class="r" style="left:1757.5px;top:126.5px" width="7" height="4.5" viewBox="0 0 7 4.5"><path d="M0.5 0.5L3.5 3.5L6.5 0.5" fill="none" stroke="#c8c6c4" stroke-width="1.1"/></svg>
<div class="t" style="top:144.71px;font-size:11.7px;color:#484644;left:1735.00px;">Sensitivity</div>
<div class="r" style="left:1798px;top:68px;width:1px;height:88px;background:#c8c6c4;"></div>
<svg class="r" style="left:1900px;top:150px" width="10" height="6" viewBox="0 0 10 6"><path d="M0.5 5.5L5 1L9.5 5.5" fill="none" stroke="#484644" stroke-width="1.1"/></svg>
<div class="r" style="left:0px;top:160px;width:1913px;height:47px;background:#e6e6e6;"></div>
<div class="r" style="left:0px;top:160px;width:1913px;height:5px;background:linear-gradient(#d4d4d4,#e6e6e6);"></div>
<div class="r" style="left:5px;top:171px;width:102px;height:26px;background:#fff;border:1px solid #c6c6c6;"></div>
<div class="t" style="top:176.69px;font-size:12.5px;color:#262626;left:12.50px;">A9</div>
<svg class="r" style="left:92px;top:180px" width="9" height="5" viewBox="0 0 9 5"><path d="M0 0H9L4.5 5Z" fill="#605e5c"/></svg>
<div class="r" style="left:121px;top:180px;width:2px;height:2px;background:#a19f9d;"></div>
<div class="r" style="left:121px;top:184px;width:2px;height:2px;background:#a19f9d;"></div>
<div class="r" style="left:121px;top:188px;width:2px;height:2px;background:#a19f9d;"></div>
<div class="r" style="left:137px;top:171px;width:110px;height:26px;background:#fff;border:1px solid #c6c6c6;"></div>
<svg class="r" style="left:150px;top:178px" width="12" height="12" viewBox="0 0 12 12"><path d="M0.5 0.5L11.5 11.5M11.5 0.5L0.5 11.5" stroke="#c8c6c4" stroke-width="1.4"/></svg>
<svg class="r" style="left:185px;top:178px" width="14" height="12" viewBox="0 0 14 12"><path d="M1 6.5L5 10.5L13 1.5" fill="none" stroke="#c8c6c4" stroke-width="1.6"/></svg>
<div class="t" style="top:175.83px;font-size:14px;color:#484644;left:222.00px;font-style:italic;font-family:"Liberation Serif",serif;font-weight:bold;">f</div>
<div class="t" style="top:179.45px;font-size:10px;color:#605e5c;left:227.50px;font-style:italic;font-family:"Liberation Serif",serif;font-weight:bold;">x</div>
<div class="r" style="left:250px;top:171px;width:1663px;height:26px;background:#fff;border:1px solid #c6c6c6;border-right:none;"></div>
<svg class="r" style="left:1902px;top:181px" width="9" height="6" viewBox="0 0 9 6"><path d="M1 1L4.5 4.5L8 1" fill="none" stroke="#484644" stroke-width="1.6"/></svg>
<div class="r" style="left:0px;top:207px;width:1899px;height:19px;background:#e6e6e6;"></div>
<div class="r" style="left:1873px;top:207px;width:26px;height:19px;background:#e6e6e6;"></div>
<div class="t" style="top:209.69px;font-size:12.5px;color:#262626;left:33.70px;transform:translateX(-50%);">A</div>
<div class="r" style="left:40px;top:207px;width:1px;height:19px;background:#c6c6c6;"></div>
<div class="t" style="top:209.69px;font-size:12.5px;color:#262626;left:169.20px;transform:translateX(-50%);">B</div>
<div class="r" style="left:297px;top:207px;width:1px;height:19px;background:#c6c6c6;"></div>
<div class="t" style="top:209.69px;font-size:12.5px;color:#262626;left:312.70px;transform:translateX(-50%);">C</div>
<div class="r" style="left:327px;top:207px;width:1px;height:19px;background:#c6c6c6;"></div>
<div class="t" style="top:209.69px;font-size:12.5px;color:#262626;left:342.70px;transform:translateX(-50%);">D</div>
<div class="r" style="left:357px;top:207px;width:1px;height:19px;background:#c6c6c6;"></div>
<div class="t" style="top:209.69px;font-size:12.5px;color:#262626;left:409.20px;transform:translateX(-50%);">E</div>
<div class="r" style="left:460px;top:207px;width:1px;height:19px;background:#c6c6c6;"></div>
<div class="t" style="top:209.69px;font-size:12.5px;color:#262626;left:512.20px;transform:translateX(-50%);">F</div>
<div class="r" style="left:563px;top:207px;width:1px;height:19px;background:#c6c6c6;"></div>
<div class="t" style="top:209.69px;font-size:12.5px;color:#262626;left:615.20px;transform:translateX(-50%);">G</div>
<div class="r" style="left:666px;top:207px;width:1px;height:19px;background:#c6c6c6;"></div>
<div class="t" style="top:209.69px;font-size:12.5px;color:#262626;left:703.20px;transform:translateX(-50%);">H</div>
<div class="r" style="left:739px;top:207px;width:1px;height:19px;background:#c6c6c6;"></div>
<div class="t" style="top:209.69px;font-size:12.5px;color:#262626;left:754.70px;transform:translateX(-50%);">I</div>
<div class="r" style="left:769px;top:207px;width:1px;height:19px;background:#c6c6c6;"></div>
<div class="t" style="top:209.69px;font-size:12.5px;color:#262626;left:780.20px;transform:translateX(-50%);">J</div>
<div class="r" style="left:790px;top:207px;width:1px;height:19px;background:#c6c6c6;"></div>
<div class="t" style="top:209.69px;font-size:12.5px;color:#262626;left:835.20px;transform:translateX(-50%);">K</div>
<div class="r" style="left:879px;top:207px;width:1px;height:19px;background:#c6c6c6;"></div>
<div class="t" style="top:209.69px;font-size:12.5px;color:#262626;left:924.20px;transform:translateX(-50%);">L</div>
<div class="r" style="left:968px;top:207px;width:1px;height:19px;background:#c6c6c6;"></div>
<div class="t" style="top:209.69px;font-size:12.5px;color:#262626;left:1013.20px;transform:translateX(-50%);">M</div>
<div class="r" style="left:1057px;top:207px;width:1px;height:19px;background:#c6c6c6;"></div>
<div class="t" style="top:209.69px;font-size:12.5px;color:#262626;left:1102.20px;transform:translateX(-50%);">N</div>
<div class="r" style="left:1146px;top:207px;width:1px;height:19px;background:#c6c6c6;"></div>
<div class="t" style="top:209.69px;font-size:12.5px;color:#262626;left:1191.20px;transform:translateX(-50%);">O</div>
<div class="r" style="left:1235px;top:207px;width:1px;height:19px;background:#c6c6c6;"></div>
<div class="t" style="top:209.69px;font-size:12.5px;color:#262626;left:1280.20px;transform:translateX(-50%);">P</div>
<div class="r" style="left:1324px;top:207px;width:1px;height:19px;background:#c6c6c6;"></div>
<div class="t" style="top:209.69px;font-size:12.5px;color:#262626;left:1369.20px;transform:translateX(-50%);">Q</div>
<div class="r" style="left:1413px;top:207px;width:1px;height:19px;background:#c6c6c6;"></div>
<div class="t" style="top:209.69px;font-size:12.5px;color:#262626;left:1458.20px;transform:translateX(-50%);">R</div>
<div class="r" style="left:1502px;top:207px;width:1px;height:19px;background:#c6c6c6;"></div>
<div class="t" style="top:209.69px;font-size:12.5px;color:#262626;left:1547.20px;transform:translateX(-50%);">S</div>
<div class="r" style="left:1591px;top:207px;width:1px;height:19px;background:#c6c6c6;"></div>
<div class="t" style="top:209.69px;font-size:12.5px;color:#262626;left:1636.20px;transform:translateX(-50%);">T</div>
<div class="r" style="left:1680px;top:207px;width:1px;height:19px;background:#c6c6c6;"></div>
<div class="t" style="top:209.69px;font-size:12.5px;color:#262626;left:1725.20px;transform:translateX(-50%);">U</div>
<div class="r" style="left:1769px;top:207px;width:1px;height:19px;background:#c6c6c6;"></div>
<div class="t" style="top:209.69px;font-size:12.5px;color:#262626;left:1814.20px;transform:translateX(-50%);">V</div>
<div class="r" style="left:1858px;top:207px;width:1px;height:19px;background:#c6c6c6;"></div>
<div class="t" style="top:209.69px;font-size:12.5px;color:#262626;left:1866.20px;transform:translateX(-50%);">W</div>
<div class="r" style="left:1873px;top:207px;width:1px;height:19px;background:#c6c6c6;"></div>
<div class="r" style="left:0px;top:226px;width:1899px;height:1px;background:#a6a6a6;"></div>
<svg class="r" style="left:10px;top:212px" width="12" height="11" viewBox="0 0 12 11"><path d="M12 0 L12 11 L0 11Z" fill="#bcbcbc"/></svg>
<div class="r" style="left:0px;top:227px;width:25px;height:762px;background:#e6e6e6;"></div>
<div class="r" style="left:25px;top:207px;width:1px;height:782px;background:#a6a6a6;"></div>
<div class="r" style="left:0px;top:243px;width:25px;height:1px;background:#c6c6c6;"></div>
<div class="r" style="left:0;top:227px;width:25px;height:16px;overflow:hidden;"><div class="t" style="left:0.8px;width:25px;text-align:center;top:0.87px;font-size:12.3px;color:#262626;">1</div></div>
<div class="r" style="left:0px;top:279px;width:25px;height:1px;background:#c6c6c6;"></div>
<div class="r" style="left:0;top:244px;width:25px;height:35px;overflow:hidden;"><div class="t" style="left:0.8px;width:25px;text-align:center;top:19.87px;font-size:12.3px;color:#262626;">2</div></div>
<div class="r" style="left:0px;top:295px;width:25px;height:1px;background:#c6c6c6;"></div>
<div class="r" style="left:0;top:280px;width:25px;height:15px;overflow:hidden;"><div class="t" style="left:0.8px;width:25px;text-align:center;top:-0.13px;font-size:12.3px;color:#262626;">3</div></div>
<div class="r" style="left:0px;top:304px;width:25px;height:1px;background:#c6c6c6;"></div>
<div class="r" style="left:0;top:296px;width:25px;height:8px;overflow:hidden;"><div class="t" style="left:0.8px;width:25px;text-align:center;top:-5.13px;font-size:12.3px;color:#262626;">4</div></div>
<div class="r" style="left:0px;top:322px;width:25px;height:1px;background:#c6c6c6;"></div>
<div class="r" style="left:0;top:305px;width:25px;height:17px;overflow:hidden;"><div class="t" style="left:0.8px;width:25px;text-align:center;top:1.87px;font-size:12.3px;color:#262626;">5</div></div>
<div class="r" style="left:0px;top:330px;width:25px;height:1px;background:#c6c6c6;"></div>
<div class="r" style="left:0;top:323px;width:25px;height:7px;overflow:hidden;"><div class="t" style="left:0.8px;width:25px;text-align:center;top:-6.13px;font-size:12.3px;color:#262626;">6</div></div>
<div class="r" style="left:0px;top:347px;width:25px;height:1px;background:#c6c6c6;"></div>
<div class="r" style="left:0;top:331px;width:25px;height:16px;overflow:hidden;"><div class="t" style="left:0.8px;width:25px;text-align:center;top:0.87px;font-size:12.3px;color:#262626;">7</div></div>
<div class="r" style="left:0px;top:363px;width:25px;height:1px;background:#c6c6c6;"></div>
<div class="r" style="left:0;top:348px;width:25px;height:15px;overflow:hidden;"><div class="t" style="left:0.8px;width:25px;text-align:center;top:-0.13px;font-size:12.3px;color:#262626;">8</div></div>
<div class="r" style="left:0px;top:384px;width:25px;height:1px;background:#c6c6c6;"></div>
<div class="r" style="left:0;top:364px;width:25px;height:20px;overflow:hidden;"><div class="t" style="left:0.8px;width:25px;text-align:center;top:4.87px;font-size:12.3px;color:#262626;">9</div></div>
<div class="r" style="left:0px;top:404px;width:25px;height:1px;background:#c6c6c6;"></div>
<div class="r" style="left:0;top:385px;width:25px;height:19px;overflow:hidden;"><div class="t" style="left:0.8px;width:25px;text-align:center;top:3.87px;font-size:12.3px;color:#262626;">10</div></div>
<div class="r" style="left:0px;top:424px;width:25px;height:1px;background:#c6c6c6;"></div>
<div class="r" style="left:0;top:405px;width:25px;height:19px;overflow:hidden;"><div class="t" style="left:0.8px;width:25px;text-align:center;top:3.87px;font-size:12.3px;color:#262626;">11</div></div>
<div class="r" style="left:0px;top:444px;width:25px;height:1px;background:#c6c6c6;"></div>
<div class="r" style="left:0;top:425px;width:25px;height:19px;overflow:hidden;"><div class="t" style="left:0.8px;width:25px;text-align:center;top:3.87px;font-size:12.3px;color:#262626;">12</div></div>
<div class="r" style="left:0px;top:453px;width:25px;height:1px;background:#c6c6c6;"></div>
<div class="r" style="left:0;top:445px;width:25px;height:8px;overflow:hidden;"><div class="t" style="left:0.8px;width:25px;text-align:center;top:-5.13px;font-size:12.3px;color:#262626;">13</div></div>
<div class="r" style="left:0px;top:473px;width:25px;height:1px;background:#c6c6c6;"></div>
<div class="r" style="left:0;top:454px;width:25px;height:19px;overflow:hidden;"><div class="t" style="left:0.8px;width:25px;text-align:center;top:3.87px;font-size:12.3px;color:#262626;">14</div></div>
<div class="r" style="left:0px;top:493px;width:25px;height:1px;background:#c6c6c6;"></div>
<div class="r" style="left:0;top:474px;width:25px;height:19px;overflow:hidden;"><div class="t" style="left:0.8px;width:25px;text-align:center;top:3.87px;font-size:12.3px;color:#262626;">15</div></div>
<div class="r" style="left:0px;top:513px;width:25px;height:1px;background:#c6c6c6;"></div>
<div class="r" style="left:0;top:494px;width:25px;height:19px;overflow:hidden;"><div class="t" style="left:0.8px;width:25px;text-align:center;top:3.87px;font-size:12.3px;color:#262626;">16</div></div>
<div class="r" style="left:0px;top:533px;width:25px;height:1px;background:#c6c6c6;"></div>
<div class="r" style="left:0;top:514px;width:25px;height:19px;overflow:hidden;"><div class="t" style="left:0.8px;width:25px;text-align:center;top:3.87px;font-size:12.3px;color:#262626;">17</div></div>
<div class="r" style="left:0px;top:553px;width:25px;height:1px;background:#c6c6c6;"></div>
<div class="r" style="left:0;top:534px;width:25px;height:19px;overflow:hidden;"><div class="t" style="left:0.8px;width:25px;text-align:center;top:3.87px;font-size:12.3px;color:#262626;">18</div></div>
<div class="r" style="left:0px;top:573px;width:25px;height:1px;background:#c6c6c6;"></div>
<div class="r" style="left:0;top:554px;width:25px;height:19px;overflow:hidden;"><div class="t" style="left:0.8px;width:25px;text-align:center;top:3.87px;font-size:12.3px;color:#262626;">19</div></div>
<div class="r" style="left:0px;top:582px;width:25px;height:1px;background:#c6c6c6;"></div>
<div class="r" style="left:0;top:574px;width:25px;height:8px;overflow:hidden;"><div class="t" style="left:0.8px;width:25px;text-align:center;top:-5.13px;font-size:12.3px;color:#262626;">20</div></div>
<div class="r" style="left:0px;top:602px;width:25px;height:1px;background:#c6c6c6;"></div>
<div class="r" style="left:0;top:583px;width:25px;height:19px;overflow:hidden;"><div class="t" style="left:0.8px;width:25px;text-align:center;top:3.87px;font-size:12.3px;color:#262626;">21</div></div>
<div class="r" style="left:0px;top:611px;width:25px;height:1px;background:#c6c6c6;"></div>
<div class="r" style="left:0;top:603px;width:25px;height:8px;overflow:hidden;"><div class="t" style="left:0.8px;width:25px;text-align:center;top:-5.13px;font-size:12.3px;color:#262626;">22</div></div>
<div class="r" style="left:0px;top:631px;width:25px;height:1px;background:#c6c6c6;"></div>
<div class="r" style="left:0;top:612px;width:25px;height:19px;overflow:hidden;"><div class="t" style="left:0.8px;width:25px;text-align:center;top:3.87px;font-size:12.3px;color:#262626;">23</div></div>
<div class="r" style="left:0px;top:651px;width:25px;height:1px;background:#c6c6c6;"></div>
<div class="r" style="left:0;top:632px;width:25px;height:19px;overflow:hidden;"><div class="t" style="left:0.8px;width:25px;text-align:center;top:3.87px;font-size:12.3px;color:#262626;">24</div></div>
<div class="r" style="left:0px;top:671px;width:25px;height:1px;background:#c6c6c6;"></div>
<div class="r" style="left:0;top:652px;width:25px;height:19px;overflow:hidden;"><div class="t" style="left:0.8px;width:25px;text-align:center;top:3.87px;font-size:12.3px;color:#262626;">25</div></div>
<div class="r" style="left:0px;top:691px;width:25px;height:1px;background:#c6c6c6;"></div>
<div class="r" style="left:0;top:672px;width:25px;height:19px;overflow:hidden;"><div class="t" style="left:0.8px;width:25px;text-align:center;top:3.87px;font-size:12.3px;color:#262626;">26</div></div>
<div class="r" style="left:0px;top:711px;width:25px;height:1px;background:#c6c6c6;"></div>
<div class="r" style="left:0;top:692px;width:25px;height:19px;overflow:hidden;"><div class="t" style="left:0.8px;width:25px;text-align:center;top:3.87px;font-size:12.3px;color:#262626;">27</div></div>
<div class="r" style="left:0px;top:731px;width:25px;height:1px;background:#c6c6c6;"></div>
<div class="r" style="left:0;top:712px;width:25px;height:19px;overflow:hidden;"><div class="t" style="left:0.8px;width:25px;text-align:center;top:3.87px;font-size:12.3px;color:#262626;">28</div></div>
<div class="r" style="left:0px;top:751px;width:25px;height:1px;background:#c6c6c6;"></div>
<div class="r" style="left:0;top:732px;width:25px;height:19px;overflow:hidden;"><div class="t" style="left:0.8px;width:25px;text-align:center;top:3.87px;font-size:12.3px;color:#262626;">29</div></div>
<div class="r" style="left:0px;top:771px;width:25px;height:1px;background:#c6c6c6;"></div>
<div class="r" style="left:0;top:752px;width:25px;height:19px;overflow:hidden;"><div class="t" style="left:0.8px;width:25px;text-align:center;top:3.87px;font-size:12.3px;color:#262626;">30</div></div>
<div class="r" style="left:0px;top:791px;width:25px;height:1px;background:#c6c6c6;"></div>
<div class="r" style="left:0;top:772px;width:25px;height:19px;overflow:hidden;"><div class="t" style="left:0.8px;width:25px;text-align:center;top:3.87px;font-size:12.3px;color:#262626;">31</div></div>
<div class="r" style="left:0px;top:811px;width:25px;height:1px;background:#c6c6c6;"></div>
<div class="r" style="left:0;top:792px;width:25px;height:19px;overflow:hidden;"><div class="t" style="left:0.8px;width:25px;text-align:center;top:3.87px;font-size:12.3px;color:#262626;">32</div></div>
<div class="r" style="left:0px;top:831px;width:25px;height:1px;background:#c6c6c6;"></div>
<div class="r" style="left:0;top:812px;width:25px;height:19px;overflow:hidden;"><div class="t" style="left:0.8px;width:25px;text-align:center;top:3.87px;font-size:12.3px;color:#262626;">33</div></div>
<div class="r" style="left:0px;top:851px;width:25px;height:1px;background:#c6c6c6;"></div>
<div class="r" style="left:0;top:832px;width:25px;height:19px;overflow:hidden;"><div class="t" style="left:0.8px;width:25px;text-align:center;top:3.87px;font-size:12.3px;color:#262626;">34</div></div>
<div class="r" style="left:0px;top:871px;width:25px;height:1px;background:#c6c6c6;"></div>
<div class="r" style="left:0;top:852px;width:25px;height:19px;overflow:hidden;"><div class="t" style="left:0.8px;width:25px;text-align:center;top:3.87px;font-size:12.3px;color:#262626;">35</div></div>
<div class="r" style="left:0px;top:891px;width:25px;height:1px;background:#c6c6c6;"></div>
<div class="r" style="left:0;top:872px;width:25px;height:19px;overflow:hidden;"><div class="t" style="left:0.8px;width:25px;text-align:center;top:3.87px;font-size:12.3px;color:#262626;">36</div></div>
<div class="r" style="left:0px;top:911px;width:25px;height:1px;background:#c6c6c6;"></div>
<div class="r" style="left:0;top:892px;width:25px;height:19px;overflow:hidden;"><div class="t" style="left:0.8px;width:25px;text-align:center;top:3.87px;font-size:12.3px;color:#262626;">37</div></div>
<div class="r" style="left:0px;top:931px;width:25px;height:1px;background:#c6c6c6;"></div>
<div class="r" style="left:0;top:912px;width:25px;height:19px;overflow:hidden;"><div class="t" style="left:0.8px;width:25px;text-align:center;top:3.87px;font-size:12.3px;color:#262626;">38</div></div>
<div class="r" style="left:0px;top:951px;width:25px;height:1px;background:#c6c6c6;"></div>
<div class="r" style="left:0;top:932px;width:25px;height:19px;overflow:hidden;"><div class="t" style="left:0.8px;width:25px;text-align:center;top:3.87px;font-size:12.3px;color:#262626;">39</div></div>
<div class="r" style="left:0px;top:960px;width:25px;height:1px;background:#c6c6c6;"></div>
<div class="r" style="left:0;top:952px;width:25px;height:8px;overflow:hidden;"><div class="t" style="left:0.8px;width:25px;text-align:center;top:-5.13px;font-size:12.3px;color:#262626;">40</div></div>
<div class="r" style="left:0px;top:980px;width:25px;height:1px;background:#c6c6c6;"></div>
<div class="r" style="left:0;top:961px;width:25px;height:19px;overflow:hidden;"><div class="t" style="left:0.8px;width:25px;text-align:center;top:3.87px;font-size:12.3px;color:#262626;">41</div></div>
<div class="r" style="left:0px;top:1000px;width:25px;height:1px;background:#c6c6c6;"></div>
<div class="r" style="left:0;top:981px;width:25px;height:19px;overflow:hidden;"><div class="t" style="left:0.8px;width:25px;text-align:center;top:3.87px;font-size:12.3px;color:#262626;">42</div></div>
<div class="r" style="left:1898px;top:226px;width:1px;height:763px;background:#a6a6a6;"></div>
<div class="r" style="left:1899px;top:207px;width:14px;height:782px;background:#e6e6e6;"></div>
<div class="r" style="left:1902px;top:209px;width:11px;height:15px;background:#fff;border:1px solid #c6c6c6;border-right:none;"></div>
<svg class="r" style="left:1904px;top:213px" width="8" height="5" viewBox="0 0 8 5"><path d="M0 5H8L4 0Z" fill="#605e5c"/></svg>
<div class="r" style="left:1902px;top:224px;width:11px;height:604px;background:#fff;border:1px solid #c6c6c6;border-right:none;"></div>
<div class="r" style="left:1902px;top:828px;width:11px;height:148px;background:#dadada;"></div>
<div class="r" style="left:1902px;top:976px;width:11px;height:13px;background:#fff;border:1px solid #c6c6c6;border-right:none;"></div>
<svg class="r" style="left:1904px;top:980px" width="8" height="5" viewBox="0 0 8 5"><path d="M0 0H8L4 5Z" fill="#605e5c"/></svg>
<div class="r" style="left:26px;top:404px;width:714px;height:21px;background:#bdd7ee;"></div>
<div class="r" style="left:26px;top:493px;width:714px;height:21px;background:#bdd7ee;"></div>
<div class="r" style="left:26px;top:553px;width:714px;height:21px;background:#bdd7ee;"></div>
<div class="r" style="left:26px;top:691px;width:714px;height:21px;background:#bdd7ee;"></div>
<div class="r" style="left:26px;top:731px;width:714px;height:21px;background:#bdd7ee;"></div>
<div class="r" style="left:26px;top:871px;width:714px;height:21px;background:#bdd7ee;"></div>
<div class="r" style="left:40px;top:295px;width:1818px;height:1px;background:#cde1f5;"></div>
<div class="r" style="left:40px;top:330px;width:1818px;height:1px;background:#cde1f5;"></div>
<div class="r" style="left:357px;top:363px;width:383px;height:1px;background:#c0c0c0;"></div>
<div class="r" style="left:790px;top:363px;width:1068px;height:1px;background:#c0c0c0;"></div>
<div class="r" style="left:790px;top:384px;width:1068px;height:1px;background:#c0c0c0;"></div>
<div class="r" style="left:40px;top:424px;width:700px;height:1px;background:#c9d2db;"></div>
<div class="r" style="left:740px;top:424px;width:30px;height:1px;background:#c0c0c0;"></div>
<div class="r" style="left:790px;top:424px;width:1068px;height:1px;background:#c0c0c0;"></div>
<div class="r" style="left:40px;top:553px;width:730px;height:1px;background:#c0c0c0;"></div>
<div class="r" style="left:790px;top:553px;width:1068px;height:1px;background:#c0c0c0;"></div>
<div class="r" style="left:40px;top:582px;width:730px;height:1px;background:#c0c0c0;"></div>
<div class="r" style="left:790px;top:582px;width:1068px;height:1px;background:#c0c0c0;"></div>
<div class="r" style="left:40px;top:602px;width:730px;height:1px;background:#c0c0c0;"></div>
<div class="r" style="left:790px;top:602px;width:1068px;height:1px;background:#c0c0c0;"></div>
<div class="r" style="left:40px;top:891px;width:700px;height:1px;background:#c9d2db;"></div>
<div class="r" style="left:740px;top:891px;width:30px;height:1px;background:#c0c0c0;"></div>
<div class="r" style="left:790px;top:891px;width:1068px;height:1px;background:#c0c0c0;"></div>
<div class="r" style="left:40px;top:960px;width:730px;height:1px;background:#c0c0c0;"></div>
<div class="r" style="left:790px;top:960px;width:1068px;height:1px;background:#c0c0c0;"></div>
<div class="r" style="left:40px;top:980px;width:730px;height:1px;background:#c0c0c0;"></div>
<div class="r" style="left:790px;top:980px;width:1068px;height:1px;background:#c0c0c0;"></div>
<svg class="r" style="left:40px;top:232px" width="36" height="56" viewBox="0 0 36 56"><path d="M6.5 4 Q6.8 2.3 8.6 2.3 L22.5 2.3 Q24.5 2.3 24 4.3 L20.5 17.5 L31.5 18.8 Q33.5 19.2 32.6 21 L14.8 52 Q13.2 54.5 12 52.5 Q11.5 51.5 12 50 L16 31.5 L4 30.4 Q2 30.2 2.3 28.3Z" fill="#ffa500"/></svg>
<div class="t" style="top:239.88px;font-size:37.7px;color:#000000;left:76.30px;transform-origin:0 0;transform:scaleX(0.828);">light&#x27;n inc</div>
<div class="t" style="top:245.48px;font-size:27.43px;color:#132a66;left:311.50px;">Income Statement for Year to date, FY</div>
<div class="t" style="top:306.11px;font-size:12.7px;color:#1c2b6e;right:1618.70px;">Companies</div>
<div class="t" style="top:306.02px;font-size:12.8px;color:#1c2b6e;font-weight:bold;left:360.20px;">All</div>
<div class="t" style="top:306.02px;font-size:12.8px;color:#1c2b6e;right:1250.00px;">Cost Centres</div>
<div class="t" style="top:306.02px;font-size:12.8px;color:#1c2b6e;font-weight:bold;left:669.10px;">All Cost Centres</div>
<div class="t" style="top:306.02px;font-size:12.8px;color:#1c2b6e;right:947.20px;">Currency</div>
<div class="t" style="top:306.02px;font-size:12.8px;color:#1c2b6e;font-weight:bold;left:971.40px;">Australian Dollar</div>
<div class="t" style="top:347.52px;font-size:11.8px;color:#404040;font-weight:bold;left:548.50px;transform:translateX(-50%);">Financial Year to date, FY 2020/2021</div>
<div class="t" style="top:367.82px;font-size:11.8px;color:#404040;font-weight:bold;right:1455.20px;">Actual</div>
<div class="t" style="top:367.82px;font-size:11.8px;color:#404040;font-weight:bold;right:1352.30px;">Budget</div>
<div class="t" style="top:367.82px;font-size:11.8px;color:#404040;font-weight:bold;right:1249.00px;">Var</div>
<div class="t" style="top:367.82px;font-size:11.8px;color:#404040;font-weight:bold;right:1176.30px;">Var %</div>
<div class="t" style="top:366.85px;font-size:13.2px;color:#404040;font-weight:bold;left:53.60px;">Scenario Source</div>
<div class="t" style="top:349.14px;font-size:12.0px;color:#404040;font-weight:bold;right:1045.50px;">Jul 2020</div>
<div class="t" style="top:366.82px;font-size:11.8px;color:#404040;font-weight:bold;right:1045.50px;">Actual</div>
<div class="t" style="top:349.14px;font-size:12.0px;color:#404040;font-weight:bold;right:956.50px;">Aug 2020</div>
<div class="t" style="top:366.82px;font-size:11.8px;color:#404040;font-weight:bold;right:956.50px;">Actual</div>
<div class="t" style="top:349.14px;font-size:12.0px;color:#404040;font-weight:bold;right:867.50px;">Sep 2020</div>
<div class="t" style="top:366.82px;font-size:11.8px;color:#404040;font-weight:bold;right:867.50px;">Actual</div>
<div class="t" style="top:349.14px;font-size:12.0px;color:#404040;font-weight:bold;right:778.50px;">Oct 2020</div>
<div class="t" style="top:366.82px;font-size:11.8px;color:#404040;font-weight:bold;right:778.50px;">Actual</div>
<div class="t" style="top:349.14px;font-size:12.0px;color:#404040;font-weight:bold;right:689.50px;">Nov 2020</div>
<div class="t" style="top:366.82px;font-size:11.8px;color:#404040;font-weight:bold;right:689.50px;">Actual</div>
<div class="t" style="top:349.14px;font-size:12.0px;color:#404040;font-weight:bold;right:600.50px;">Dec 2020</div>
<div class="t" style="top:366.82px;font-size:11.8px;color:#404040;font-weight:bold;right:600.50px;">Actual</div>
<div class="t" style="top:349.14px;font-size:12.0px;color:#404040;font-weight:bold;right:511.50px;">Jan 2021</div>
<div class="t" style="top:366.82px;font-size:11.8px;color:#404040;font-weight:bold;right:511.50px;">Actual</div>
<div class="t" style="top:349.14px;font-size:12.0px;color:#404040;font-weight:bold;right:422.50px;">Feb 2021</div>
<div class="t" style="top:366.82px;font-size:11.8px;color:#404040;font-weight:bold;right:422.50px;">Actual</div>
<div class="t" style="top:349.14px;font-size:12.0px;color:#404040;font-weight:bold;right:333.50px;">Mar 2021</div>
<div class="t" style="top:366.82px;font-size:11.8px;color:#404040;font-weight:bold;right:333.50px;">Actual</div>
<div class="t" style="top:349.14px;font-size:12.0px;color:#404040;font-weight:bold;right:244.50px;">Apr 2021</div>
<div class="t" style="top:366.82px;font-size:11.8px;color:#404040;font-weight:bold;right:244.50px;">Actual</div>
<div class="t" style="top:349.14px;font-size:12.0px;color:#404040;font-weight:bold;right:155.50px;">May 2021</div>
<div class="t" style="top:366.82px;font-size:11.8px;color:#404040;font-weight:bold;right:155.50px;">Actual</div>
<div class="t" style="top:349.14px;font-size:12.0px;color:#404040;font-weight:bold;right:66.50px;">Jun 2021</div>
<div class="t" style="top:366.82px;font-size:11.8px;color:#404040;font-weight:bold;right:66.50px;">Actual</div>
<div class="t" style="top:387.32px;font-size:12.8px;color:#404040;left:61.20px;">Sales</div>
<svg class="r" style="left:306px;top:388px" width="14" height="14" viewBox="0 0 14 14"><g stroke="#ed7d31" stroke-width="1.2" fill="none"><rect x="2.8" y="2.8" width="7.8" height="7.8"/><path d="M0 6.85H13.5"/></g><path d="M6.85 0V13.5" stroke="#f2a77a" stroke-width="1.1" stroke-dasharray="1.6 1.2"/></svg>
<svg class="r" style="left:335px;top:389px" width="16" height="6" viewBox="0 0 16 6"><g fill="#00b050"><circle cx="1.9" cy="4.1" r="1.9"/><path d="M0.1 4.2 Q0.2 0.6 3.7 0 L3.8 0.9 Q2.1 1.5 2.2 3.2Z"/><circle cx="5.8" cy="4.1" r="1.9"/><path d="M4.0 4.2 Q4.1 0.6 7.6 0 L7.7 0.9 Q6.0 1.5 6.1 3.2Z"/><circle cx="10.2" cy="1.9" r="1.9"/><path d="M12.0 1.8 Q11.9 5.4 8.4 6 L8.3 5.1 Q10.0 4.5 9.9 2.8Z"/><circle cx="14.1" cy="1.9" r="1.9"/><path d="M15.9 1.8 Q15.8 5.4 12.3 6 L12.2 5.1 Q13.9 4.5 13.8 2.8Z"/></g></svg>
<div class="t" style="top:387.13px;font-size:13px;color:#404040;right:1459.00px;">225,600,210</div>
<div class="t" style="top:387.13px;font-size:13px;color:#404040;right:1356.00px;">416,819,959</div>
<div class="t" style="top:387.13px;font-size:13px;color:#404040;right:1248.50px;">(191,219,749)</div>
<div class="t" style="top:387.13px;font-size:13px;color:#404040;right:1175.20px;">(45.9%)</div>
<div class="t" style="top:387.13px;font-size:13px;color:#404040;right:1040.00px;">28,205,408</div>
<div class="t" style="top:387.13px;font-size:13px;color:#404040;right:951.00px;">37,649,615</div>
<div class="t" style="top:387.13px;font-size:13px;color:#404040;right:862.00px;">34,764,643</div>
<div class="t" style="top:387.13px;font-size:13px;color:#404040;right:773.00px;">32,503,425</div>
<div class="t" style="top:387.13px;font-size:13px;color:#404040;right:684.00px;">41,701,793</div>
<div class="t" style="top:387.13px;font-size:13px;color:#404040;right:595.00px;">36,064,285</div>
<div class="t" style="top:387.13px;font-size:13px;color:#404040;right:506.00px;">14,711,040</div>
<div class="t" style="top:387.13px;font-size:13px;color:#404040;right:412.50px;">-</div>
<div class="t" style="top:387.13px;font-size:13px;color:#404040;right:323.50px;">-</div>
<div class="t" style="top:387.13px;font-size:13px;color:#404040;right:234.50px;">-</div>
<div class="t" style="top:387.13px;font-size:13px;color:#404040;right:145.50px;">-</div>
<div class="t" style="top:387.13px;font-size:13px;color:#404040;right:56.50px;">-</div>
<div class="t" style="top:407.32px;font-size:12.8px;color:#404040;left:61.20px;">Freight and other revenue</div>
<svg class="r" style="left:306px;top:408px" width="14" height="14" viewBox="0 0 14 14"><g stroke="#ed7d31" stroke-width="1.2" fill="none"><rect x="2.8" y="2.8" width="7.8" height="7.8"/><path d="M0 6.85H13.5"/></g><path d="M6.85 0V13.5" stroke="#f2a77a" stroke-width="1.1" stroke-dasharray="1.6 1.2"/></svg>
<svg class="r" style="left:335px;top:409px" width="16" height="6" viewBox="0 0 16 6"><g fill="#00b050"><circle cx="1.9" cy="4.1" r="1.9"/><path d="M0.1 4.2 Q0.2 0.6 3.7 0 L3.8 0.9 Q2.1 1.5 2.2 3.2Z"/><circle cx="5.8" cy="4.1" r="1.9"/><path d="M4.0 4.2 Q4.1 0.6 7.6 0 L7.7 0.9 Q6.0 1.5 6.1 3.2Z"/><circle cx="10.2" cy="1.9" r="1.9"/><path d="M12.0 1.8 Q11.9 5.4 8.4 6 L8.3 5.1 Q10.0 4.5 9.9 2.8Z"/><circle cx="14.1" cy="1.9" r="1.9"/><path d="M15.9 1.8 Q15.8 5.4 12.3 6 L12.2 5.1 Q13.9 4.5 13.8 2.8Z"/></g></svg>
<div class="t" style="top:407.13px;font-size:13px;color:#404040;right:1459.00px;">689,587</div>
<div class="t" style="top:407.13px;font-size:13px;color:#404040;right:1356.00px;">1,177,531</div>
<div class="t" style="top:407.13px;font-size:13px;color:#404040;right:1248.50px;">(487,944)</div>
<div class="t" style="top:407.13px;font-size:13px;color:#404040;right:1175.20px;">(41.4%)</div>
<div class="t" style="top:407.13px;font-size:13px;color:#404040;right:1040.00px;">105,347</div>
<div class="t" style="top:407.13px;font-size:13px;color:#404040;right:951.00px;">87,386</div>
<div class="t" style="top:407.13px;font-size:13px;color:#404040;right:862.00px;">126,098</div>
<div class="t" style="top:407.13px;font-size:13px;color:#404040;right:773.00px;">75,544</div>
<div class="t" style="top:407.13px;font-size:13px;color:#404040;right:684.00px;">100,107</div>
<div class="t" style="top:407.13px;font-size:13px;color:#404040;right:595.00px;">120,270</div>
<div class="t" style="top:407.13px;font-size:13px;color:#404040;right:506.00px;">74,835</div>
<div class="t" style="top:407.13px;font-size:13px;color:#404040;right:412.50px;">-</div>
<div class="t" style="top:407.13px;font-size:13px;color:#404040;right:323.50px;">-</div>
<div class="t" style="top:407.13px;font-size:13px;color:#404040;right:234.50px;">-</div>
<div class="t" style="top:407.13px;font-size:13px;color:#404040;right:145.50px;">-</div>
<div class="t" style="top:407.13px;font-size:13px;color:#404040;right:56.50px;">-</div>
<div class="t" style="top:426.77px;font-size:13.4px;color:#404040;font-weight:bold;left:52.50px;">Total Revenue</div>
<svg class="r" style="left:306px;top:428px" width="14" height="14" viewBox="0 0 14 14"><g stroke="#ed7d31" stroke-width="1.2" fill="none"><rect x="2.8" y="2.8" width="7.8" height="7.8"/><path d="M0 6.85H13.5"/></g><path d="M6.85 0V13.5" stroke="#f2a77a" stroke-width="1.1" stroke-dasharray="1.6 1.2"/></svg>
<svg class="r" style="left:335px;top:429px" width="16" height="6" viewBox="0 0 16 6"><g fill="#00b050"><circle cx="1.9" cy="4.1" r="1.9"/><path d="M0.1 4.2 Q0.2 0.6 3.7 0 L3.8 0.9 Q2.1 1.5 2.2 3.2Z"/><circle cx="5.8" cy="4.1" r="1.9"/><path d="M4.0 4.2 Q4.1 0.6 7.6 0 L7.7 0.9 Q6.0 1.5 6.1 3.2Z"/><circle cx="10.2" cy="1.9" r="1.9"/><path d="M12.0 1.8 Q11.9 5.4 8.4 6 L8.3 5.1 Q10.0 4.5 9.9 2.8Z"/><circle cx="14.1" cy="1.9" r="1.9"/><path d="M15.9 1.8 Q15.8 5.4 12.3 6 L12.2 5.1 Q13.9 4.5 13.8 2.8Z"/></g></svg>
<div class="t" style="top:427.13px;font-size:13px;color:#404040;font-weight:bold;right:1459.00px;">226,289,797</div>
<div class="t" style="top:427.13px;font-size:13px;color:#404040;font-weight:bold;right:1356.00px;">417,997,490</div>
<div class="t" style="top:427.13px;font-size:13px;color:#404040;font-weight:bold;right:1248.50px;">(191,707,693)</div>
<div class="t" style="top:427.13px;font-size:13px;color:#404040;font-weight:bold;right:1175.20px;">(45.9%)</div>
<div class="t" style="top:427.13px;font-size:13px;color:#404040;font-weight:bold;right:1040.00px;">28,310,755</div>
<div class="t" style="top:427.13px;font-size:13px;color:#404040;font-weight:bold;right:951.00px;">37,737,001</div>
<div class="t" style="top:427.13px;font-size:13px;color:#404040;font-weight:bold;right:862.00px;">34,890,741</div>
<div class="t" style="top:427.13px;font-size:13px;color:#404040;font-weight:bold;right:773.00px;">32,578,969</div>
<div class="t" style="top:427.13px;font-size:13px;color:#404040;font-weight:bold;right:684.00px;">41,801,901</div>
<div class="t" style="top:427.13px;font-size:13px;color:#404040;font-weight:bold;right:595.00px;">36,184,555</div>
<div class="t" style="top:427.13px;font-size:13px;color:#404040;font-weight:bold;right:506.00px;">14,785,875</div>
<div class="t" style="top:427.13px;font-size:13px;color:#404040;right:412.50px;">-</div>
<div class="t" style="top:427.13px;font-size:13px;color:#404040;right:323.50px;">-</div>
<div class="t" style="top:427.13px;font-size:13px;color:#404040;right:234.50px;">-</div>
<div class="t" style="top:427.13px;font-size:13px;color:#404040;right:145.50px;">-</div>
<div class="t" style="top:427.13px;font-size:13px;color:#404040;right:56.50px;">-</div>
<div class="t" style="top:456.32px;font-size:12.8px;color:#404040;left:61.20px;">Stock Variance</div>
<svg class="r" style="left:306px;top:457px" width="14" height="14" viewBox="0 0 14 14"><g stroke="#ed7d31" stroke-width="1.2" fill="none"><rect x="2.8" y="2.8" width="7.8" height="7.8"/><path d="M0 6.85H13.5"/></g><path d="M6.85 0V13.5" stroke="#f2a77a" stroke-width="1.1" stroke-dasharray="1.6 1.2"/></svg>
<svg class="r" style="left:335px;top:458px" width="16" height="6" viewBox="0 0 16 6"><g fill="#00b050"><circle cx="1.9" cy="4.1" r="1.9"/><path d="M0.1 4.2 Q0.2 0.6 3.7 0 L3.8 0.9 Q2.1 1.5 2.2 3.2Z"/><circle cx="5.8" cy="4.1" r="1.9"/><path d="M4.0 4.2 Q4.1 0.6 7.6 0 L7.7 0.9 Q6.0 1.5 6.1 3.2Z"/><circle cx="10.2" cy="1.9" r="1.9"/><path d="M12.0 1.8 Q11.9 5.4 8.4 6 L8.3 5.1 Q10.0 4.5 9.9 2.8Z"/><circle cx="14.1" cy="1.9" r="1.9"/><path d="M15.9 1.8 Q15.8 5.4 12.3 6 L12.2 5.1 Q13.9 4.5 13.8 2.8Z"/></g></svg>
<div class="t" style="top:456.13px;font-size:13px;color:#404040;right:1459.00px;">3,063,245</div>
<div class="t" style="top:456.13px;font-size:13px;color:#404040;right:1356.00px;">6,196,769</div>
<div class="t" style="top:456.13px;font-size:13px;color:#404040;right:1253.00px;">3,133,525</div>
<div class="t" style="top:456.13px;font-size:13px;color:#404040;right:1176.40px;">50.6%</div>
<div class="t" style="top:456.13px;font-size:13px;color:#404040;right:1040.00px;">173,456</div>
<div class="t" style="top:456.13px;font-size:13px;color:#404040;right:951.00px;">386,089</div>
<div class="t" style="top:456.13px;font-size:13px;color:#404040;right:862.00px;">372,075</div>
<div class="t" style="top:456.13px;font-size:13px;color:#404040;right:773.00px;">592,794</div>
<div class="t" style="top:456.13px;font-size:13px;color:#404040;right:684.00px;">558,121</div>
<div class="t" style="top:456.13px;font-size:13px;color:#404040;right:595.00px;">883,789</div>
<div class="t" style="top:456.13px;font-size:13px;color:#404040;right:506.00px;">96,922</div>
<div class="t" style="top:456.13px;font-size:13px;color:#404040;right:412.50px;">-</div>
<div class="t" style="top:456.13px;font-size:13px;color:#404040;right:323.50px;">-</div>
<div class="t" style="top:456.13px;font-size:13px;color:#404040;right:234.50px;">-</div>
<div class="t" style="top:456.13px;font-size:13px;color:#404040;right:145.50px;">-</div>
<div class="t" style="top:456.13px;font-size:13px;color:#404040;right:56.50px;">-</div>
<div class="t" style="top:476.32px;font-size:12.8px;color:#404040;left:61.20px;">Costs of goods sold</div>
<svg class="r" style="left:306px;top:477px" width="14" height="14" viewBox="0 0 14 14"><g stroke="#ed7d31" stroke-width="1.2" fill="none"><rect x="2.8" y="2.8" width="7.8" height="7.8"/><path d="M0 6.85H13.5"/></g><path d="M6.85 0V13.5" stroke="#f2a77a" stroke-width="1.1" stroke-dasharray="1.6 1.2"/></svg>
<svg class="r" style="left:335px;top:478px" width="16" height="6" viewBox="0 0 16 6"><g fill="#00b050"><circle cx="1.9" cy="4.1" r="1.9"/><path d="M0.1 4.2 Q0.2 0.6 3.7 0 L3.8 0.9 Q2.1 1.5 2.2 3.2Z"/><circle cx="5.8" cy="4.1" r="1.9"/><path d="M4.0 4.2 Q4.1 0.6 7.6 0 L7.7 0.9 Q6.0 1.5 6.1 3.2Z"/><circle cx="10.2" cy="1.9" r="1.9"/><path d="M12.0 1.8 Q11.9 5.4 8.4 6 L8.3 5.1 Q10.0 4.5 9.9 2.8Z"/><circle cx="14.1" cy="1.9" r="1.9"/><path d="M15.9 1.8 Q15.8 5.4 12.3 6 L12.2 5.1 Q13.9 4.5 13.8 2.8Z"/></g></svg>
<div class="t" style="top:476.13px;font-size:13px;color:#404040;right:1459.00px;">99,599,069</div>
<div class="t" style="top:476.13px;font-size:13px;color:#404040;right:1356.00px;">192,603,226</div>
<div class="t" style="top:476.13px;font-size:13px;color:#404040;right:1253.00px;">93,004,157</div>
<div class="t" style="top:476.13px;font-size:13px;color:#404040;right:1176.40px;">48.3%</div>
<div class="t" style="top:476.13px;font-size:13px;color:#404040;right:1040.00px;">12,184,280</div>
<div class="t" style="top:476.13px;font-size:13px;color:#404040;right:951.00px;">16,840,834</div>
<div class="t" style="top:476.13px;font-size:13px;color:#404040;right:862.00px;">15,900,927</div>
<div class="t" style="top:476.13px;font-size:13px;color:#404040;right:773.00px;">13,688,122</div>
<div class="t" style="top:476.13px;font-size:13px;color:#404040;right:684.00px;">17,877,400</div>
<div class="t" style="top:476.13px;font-size:13px;color:#404040;right:595.00px;">16,086,908</div>
<div class="t" style="top:476.13px;font-size:13px;color:#404040;right:506.00px;">7,020,597</div>
<div class="t" style="top:476.13px;font-size:13px;color:#404040;right:412.50px;">-</div>
<div class="t" style="top:476.13px;font-size:13px;color:#404040;right:323.50px;">-</div>
<div class="t" style="top:476.13px;font-size:13px;color:#404040;right:234.50px;">-</div>
<div class="t" style="top:476.13px;font-size:13px;color:#404040;right:145.50px;">-</div>
<div class="t" style="top:476.13px;font-size:13px;color:#404040;right:56.50px;">-</div>
<div class="t" style="top:496.32px;font-size:12.8px;color:#404040;left:61.20px;">Freight - incoming only</div>
<svg class="r" style="left:306px;top:497px" width="14" height="14" viewBox="0 0 14 14"><g stroke="#ed7d31" stroke-width="1.2" fill="none"><rect x="2.8" y="2.8" width="7.8" height="7.8"/><path d="M0 6.85H13.5"/></g><path d="M6.85 0V13.5" stroke="#f2a77a" stroke-width="1.1" stroke-dasharray="1.6 1.2"/></svg>
<svg class="r" style="left:335px;top:498px" width="16" height="6" viewBox="0 0 16 6"><g fill="#00b050"><circle cx="1.9" cy="4.1" r="1.9"/><path d="M0.1 4.2 Q0.2 0.6 3.7 0 L3.8 0.9 Q2.1 1.5 2.2 3.2Z"/><circle cx="5.8" cy="4.1" r="1.9"/><path d="M4.0 4.2 Q4.1 0.6 7.6 0 L7.7 0.9 Q6.0 1.5 6.1 3.2Z"/><circle cx="10.2" cy="1.9" r="1.9"/><path d="M12.0 1.8 Q11.9 5.4 8.4 6 L8.3 5.1 Q10.0 4.5 9.9 2.8Z"/><circle cx="14.1" cy="1.9" r="1.9"/><path d="M15.9 1.8 Q15.8 5.4 12.3 6 L12.2 5.1 Q13.9 4.5 13.8 2.8Z"/></g></svg>
<div class="t" style="top:496.13px;font-size:13px;color:#404040;right:1459.00px;">748,171</div>
<div class="t" style="top:496.13px;font-size:13px;color:#404040;right:1356.00px;">347,420</div>
<div class="t" style="top:496.13px;font-size:13px;color:#404040;right:1248.50px;">(400,751)</div>
<div class="t" style="top:496.13px;font-size:13px;color:#404040;right:1175.20px;">(115.4%)</div>
<div class="t" style="top:496.13px;font-size:13px;color:#404040;right:1040.00px;">249,219</div>
<div class="t" style="top:496.13px;font-size:13px;color:#404040;right:951.00px;">130,838</div>
<div class="t" style="top:496.13px;font-size:13px;color:#404040;right:862.00px;">176,800</div>
<div class="t" style="top:496.13px;font-size:13px;color:#404040;right:773.00px;">114,863</div>
<div class="t" style="top:496.13px;font-size:13px;color:#404040;right:684.00px;">72,686</div>
<div class="t" style="top:496.13px;font-size:13px;color:#404040;right:595.00px;">69,092</div>
<div class="t" style="top:496.13px;font-size:13px;color:#404040;right:501.50px;">(65,326)</div>
<div class="t" style="top:496.13px;font-size:13px;color:#404040;right:412.50px;">-</div>
<div class="t" style="top:496.13px;font-size:13px;color:#404040;right:323.50px;">-</div>
<div class="t" style="top:496.13px;font-size:13px;color:#404040;right:234.50px;">-</div>
<div class="t" style="top:496.13px;font-size:13px;color:#404040;right:145.50px;">-</div>
<div class="t" style="top:496.13px;font-size:13px;color:#404040;right:56.50px;">-</div>
<div class="t" style="top:516.32px;font-size:12.8px;color:#404040;left:61.20px;">Customs duties</div>
<svg class="r" style="left:306px;top:517px" width="14" height="14" viewBox="0 0 14 14"><g stroke="#ed7d31" stroke-width="1.2" fill="none"><rect x="2.8" y="2.8" width="7.8" height="7.8"/><path d="M0 6.85H13.5"/></g><path d="M6.85 0V13.5" stroke="#f2a77a" stroke-width="1.1" stroke-dasharray="1.6 1.2"/></svg>
<svg class="r" style="left:335px;top:518px" width="16" height="6" viewBox="0 0 16 6"><g fill="#00b050"><circle cx="1.9" cy="4.1" r="1.9"/><path d="M0.1 4.2 Q0.2 0.6 3.7 0 L3.8 0.9 Q2.1 1.5 2.2 3.2Z"/><circle cx="5.8" cy="4.1" r="1.9"/><path d="M4.0 4.2 Q4.1 0.6 7.6 0 L7.7 0.9 Q6.0 1.5 6.1 3.2Z"/><circle cx="10.2" cy="1.9" r="1.9"/><path d="M12.0 1.8 Q11.9 5.4 8.4 6 L8.3 5.1 Q10.0 4.5 9.9 2.8Z"/><circle cx="14.1" cy="1.9" r="1.9"/><path d="M15.9 1.8 Q15.8 5.4 12.3 6 L12.2 5.1 Q13.9 4.5 13.8 2.8Z"/></g></svg>
<div class="t" style="top:516.13px;font-size:13px;color:#404040;right:1454.50px;">-</div>
<div class="t" style="top:516.13px;font-size:13px;color:#404040;right:1351.50px;">-</div>
<div class="t" style="top:516.13px;font-size:13px;color:#404040;right:1248.50px;">-</div>
<div class="t" style="top:516.13px;font-size:13px;color:#404040;right:1176.40px;">0.0%</div>
<div class="t" style="top:516.13px;font-size:13px;color:#404040;right:1035.50px;">-</div>
<div class="t" style="top:516.13px;font-size:13px;color:#404040;right:946.50px;">-</div>
<div class="t" style="top:516.13px;font-size:13px;color:#404040;right:857.50px;">-</div>
<div class="t" style="top:516.13px;font-size:13px;color:#404040;right:768.50px;">-</div>
<div class="t" style="top:516.13px;font-size:13px;color:#404040;right:679.50px;">-</div>
<div class="t" style="top:516.13px;font-size:13px;color:#404040;right:590.50px;">-</div>
<div class="t" style="top:516.13px;font-size:13px;color:#404040;right:501.50px;">-</div>
<div class="t" style="top:516.13px;font-size:13px;color:#404040;right:412.50px;">-</div>
<div class="t" style="top:516.13px;font-size:13px;color:#404040;right:323.50px;">-</div>
<div class="t" style="top:516.13px;font-size:13px;color:#404040;right:234.50px;">-</div>
<div class="t" style="top:516.13px;font-size:13px;color:#404040;right:145.50px;">-</div>
<div class="t" style="top:516.13px;font-size:13px;color:#404040;right:56.50px;">-</div>
<div class="t" style="top:536.32px;font-size:12.8px;color:#404040;left:61.20px;">Freight - outgoing only</div>
<svg class="r" style="left:306px;top:537px" width="14" height="14" viewBox="0 0 14 14"><g stroke="#ed7d31" stroke-width="1.2" fill="none"><rect x="2.8" y="2.8" width="7.8" height="7.8"/><path d="M0 6.85H13.5"/></g><path d="M6.85 0V13.5" stroke="#f2a77a" stroke-width="1.1" stroke-dasharray="1.6 1.2"/></svg>
<svg class="r" style="left:335px;top:538px" width="16" height="6" viewBox="0 0 16 6"><g fill="#00b050"><circle cx="1.9" cy="4.1" r="1.9"/><path d="M0.1 4.2 Q0.2 0.6 3.7 0 L3.8 0.9 Q2.1 1.5 2.2 3.2Z"/><circle cx="5.8" cy="4.1" r="1.9"/><path d="M4.0 4.2 Q4.1 0.6 7.6 0 L7.7 0.9 Q6.0 1.5 6.1 3.2Z"/><circle cx="10.2" cy="1.9" r="1.9"/><path d="M12.0 1.8 Q11.9 5.4 8.4 6 L8.3 5.1 Q10.0 4.5 9.9 2.8Z"/><circle cx="14.1" cy="1.9" r="1.9"/><path d="M15.9 1.8 Q15.8 5.4 12.3 6 L12.2 5.1 Q13.9 4.5 13.8 2.8Z"/></g></svg>
<div class="t" style="top:536.13px;font-size:13px;color:#404040;right:1459.00px;">5,092,462</div>
<div class="t" style="top:536.13px;font-size:13px;color:#404040;right:1356.00px;">9,826,928</div>
<div class="t" style="top:536.13px;font-size:13px;color:#404040;right:1253.00px;">4,734,466</div>
<div class="t" style="top:536.13px;font-size:13px;color:#404040;right:1176.40px;">48.2%</div>
<div class="t" style="top:536.13px;font-size:13px;color:#404040;right:1040.00px;">695,014</div>
<div class="t" style="top:536.13px;font-size:13px;color:#404040;right:951.00px;">982,941</div>
<div class="t" style="top:536.13px;font-size:13px;color:#404040;right:862.00px;">831,855</div>
<div class="t" style="top:536.13px;font-size:13px;color:#404040;right:773.00px;">985,632</div>
<div class="t" style="top:536.13px;font-size:13px;color:#404040;right:684.00px;">1,068,070</div>
<div class="t" style="top:536.13px;font-size:13px;color:#404040;right:595.00px;">761,233</div>
<div class="t" style="top:536.13px;font-size:13px;color:#404040;right:501.50px;">(232,283)</div>
<div class="t" style="top:536.13px;font-size:13px;color:#404040;right:412.50px;">-</div>
<div class="t" style="top:536.13px;font-size:13px;color:#404040;right:323.50px;">-</div>
<div class="t" style="top:536.13px;font-size:13px;color:#404040;right:234.50px;">-</div>
<div class="t" style="top:536.13px;font-size:13px;color:#404040;right:145.50px;">-</div>
<div class="t" style="top:536.13px;font-size:13px;color:#404040;right:56.50px;">-</div>
<div class="t" style="top:555.77px;font-size:13.4px;color:#404040;font-weight:bold;left:52.50px;">Cost of Goods Sold</div>
<svg class="r" style="left:306px;top:557px" width="14" height="14" viewBox="0 0 14 14"><g stroke="#ed7d31" stroke-width="1.2" fill="none"><rect x="2.8" y="2.8" width="7.8" height="7.8"/><path d="M0 6.85H13.5"/></g><path d="M6.85 0V13.5" stroke="#f2a77a" stroke-width="1.1" stroke-dasharray="1.6 1.2"/></svg>
<svg class="r" style="left:335px;top:558px" width="16" height="6" viewBox="0 0 16 6"><g fill="#00b050"><circle cx="1.9" cy="4.1" r="1.9"/><path d="M0.1 4.2 Q0.2 0.6 3.7 0 L3.8 0.9 Q2.1 1.5 2.2 3.2Z"/><circle cx="5.8" cy="4.1" r="1.9"/><path d="M4.0 4.2 Q4.1 0.6 7.6 0 L7.7 0.9 Q6.0 1.5 6.1 3.2Z"/><circle cx="10.2" cy="1.9" r="1.9"/><path d="M12.0 1.8 Q11.9 5.4 8.4 6 L8.3 5.1 Q10.0 4.5 9.9 2.8Z"/><circle cx="14.1" cy="1.9" r="1.9"/><path d="M15.9 1.8 Q15.8 5.4 12.3 6 L12.2 5.1 Q13.9 4.5 13.8 2.8Z"/></g></svg>
<div class="t" style="top:556.13px;font-size:13px;color:#404040;font-weight:bold;right:1459.00px;">108,502,947</div>
<div class="t" style="top:556.13px;font-size:13px;color:#404040;font-weight:bold;right:1356.00px;">208,974,344</div>
<div class="t" style="top:556.13px;font-size:13px;color:#404040;font-weight:bold;right:1253.00px;">100,471,397</div>
<div class="t" style="top:556.13px;font-size:13px;color:#404040;font-weight:bold;right:1176.40px;">48.1%</div>
<div class="t" style="top:556.13px;font-size:13px;color:#404040;font-weight:bold;right:1040.00px;">13,301,969</div>
<div class="t" style="top:556.13px;font-size:13px;color:#404040;font-weight:bold;right:951.00px;">18,340,702</div>
<div class="t" style="top:556.13px;font-size:13px;color:#404040;font-weight:bold;right:862.00px;">17,281,658</div>
<div class="t" style="top:556.13px;font-size:13px;color:#404040;font-weight:bold;right:773.00px;">15,381,411</div>
<div class="t" style="top:556.13px;font-size:13px;color:#404040;font-weight:bold;right:684.00px;">19,576,276</div>
<div class="t" style="top:556.13px;font-size:13px;color:#404040;font-weight:bold;right:595.00px;">17,801,021</div>
<div class="t" style="top:556.13px;font-size:13px;color:#404040;font-weight:bold;right:506.00px;">6,819,911</div>
<div class="t" style="top:556.13px;font-size:13px;color:#404040;right:412.50px;">-</div>
<div class="t" style="top:556.13px;font-size:13px;color:#404040;right:323.50px;">-</div>
<div class="t" style="top:556.13px;font-size:13px;color:#404040;right:234.50px;">-</div>
<div class="t" style="top:556.13px;font-size:13px;color:#404040;right:145.50px;">-</div>
<div class="t" style="top:556.13px;font-size:13px;color:#404040;right:56.50px;">-</div>
<div class="t" style="top:584.77px;font-size:13.4px;color:#404040;font-weight:bold;left:52.50px;">Gross profit</div>
<svg class="r" style="left:306px;top:586px" width="14" height="14" viewBox="0 0 14 14"><g stroke="#ed7d31" stroke-width="1.2" fill="none"><rect x="2.8" y="2.8" width="7.8" height="7.8"/><path d="M0 6.85H13.5"/></g><path d="M6.85 0V13.5" stroke="#f2a77a" stroke-width="1.1" stroke-dasharray="1.6 1.2"/></svg>
<svg class="r" style="left:335px;top:587px" width="16" height="6" viewBox="0 0 16 6"><g fill="#00b050"><circle cx="1.9" cy="4.1" r="1.9"/><path d="M0.1 4.2 Q0.2 0.6 3.7 0 L3.8 0.9 Q2.1 1.5 2.2 3.2Z"/><circle cx="5.8" cy="4.1" r="1.9"/><path d="M4.0 4.2 Q4.1 0.6 7.6 0 L7.7 0.9 Q6.0 1.5 6.1 3.2Z"/><circle cx="10.2" cy="1.9" r="1.9"/><path d="M12.0 1.8 Q11.9 5.4 8.4 6 L8.3 5.1 Q10.0 4.5 9.9 2.8Z"/><circle cx="14.1" cy="1.9" r="1.9"/><path d="M15.9 1.8 Q15.8 5.4 12.3 6 L12.2 5.1 Q13.9 4.5 13.8 2.8Z"/></g></svg>
<div class="t" style="top:585.13px;font-size:13px;color:#404040;font-weight:bold;right:1459.00px;">117,786,850</div>
<div class="t" style="top:585.13px;font-size:13px;color:#404040;font-weight:bold;right:1356.00px;">209,023,146</div>
<div class="t" style="top:585.13px;font-size:13px;color:#404040;font-weight:bold;right:1248.50px;">(91,236,296)</div>
<div class="t" style="top:585.13px;font-size:13px;color:#404040;right:1175.20px;">(43.6%)</div>
<div class="t" style="top:585.13px;font-size:13px;color:#404040;font-weight:bold;right:1040.00px;">15,008,787</div>
<div class="t" style="top:585.13px;font-size:13px;color:#404040;font-weight:bold;right:951.00px;">19,396,299</div>
<div class="t" style="top:585.13px;font-size:13px;color:#404040;font-weight:bold;right:862.00px;">17,609,083</div>
<div class="t" style="top:585.13px;font-size:13px;color:#404040;font-weight:bold;right:773.00px;">17,197,558</div>
<div class="t" style="top:585.13px;font-size:13px;color:#404040;font-weight:bold;right:684.00px;">22,225,625</div>
<div class="t" style="top:585.13px;font-size:13px;color:#404040;font-weight:bold;right:595.00px;">18,383,533</div>
<div class="t" style="top:585.13px;font-size:13px;color:#404040;font-weight:bold;right:506.00px;">7,965,965</div>
<div class="t" style="top:585.13px;font-size:13px;color:#404040;right:412.50px;">-</div>
<div class="t" style="top:585.13px;font-size:13px;color:#404040;right:323.50px;">-</div>
<div class="t" style="top:585.13px;font-size:13px;color:#404040;right:234.50px;">-</div>
<div class="t" style="top:585.13px;font-size:13px;color:#404040;right:145.50px;">-</div>
<div class="t" style="top:585.13px;font-size:13px;color:#404040;right:56.50px;">-</div>
<div class="t" style="top:614.32px;font-size:12.8px;color:#404040;left:61.20px;">Staff costs</div>
<svg class="r" style="left:306px;top:615px" width="14" height="14" viewBox="0 0 14 14"><g stroke="#ed7d31" stroke-width="1.2" fill="none"><rect x="2.8" y="2.8" width="7.8" height="7.8"/><path d="M0 6.85H13.5"/></g><path d="M6.85 0V13.5" stroke="#f2a77a" stroke-width="1.1" stroke-dasharray="1.6 1.2"/></svg>
<svg class="r" style="left:335px;top:616px" width="16" height="6" viewBox="0 0 16 6"><g fill="#00b050"><circle cx="1.9" cy="4.1" r="1.9"/><path d="M0.1 4.2 Q0.2 0.6 3.7 0 L3.8 0.9 Q2.1 1.5 2.2 3.2Z"/><circle cx="5.8" cy="4.1" r="1.9"/><path d="M4.0 4.2 Q4.1 0.6 7.6 0 L7.7 0.9 Q6.0 1.5 6.1 3.2Z"/><circle cx="10.2" cy="1.9" r="1.9"/><path d="M12.0 1.8 Q11.9 5.4 8.4 6 L8.3 5.1 Q10.0 4.5 9.9 2.8Z"/><circle cx="14.1" cy="1.9" r="1.9"/><path d="M15.9 1.8 Q15.8 5.4 12.3 6 L12.2 5.1 Q13.9 4.5 13.8 2.8Z"/></g></svg>
<div class="t" style="top:614.13px;font-size:13px;color:#404040;right:1459.00px;">52,679,579</div>
<div class="t" style="top:614.13px;font-size:13px;color:#404040;right:1356.00px;">101,171,099</div>
<div class="t" style="top:614.13px;font-size:13px;color:#404040;right:1253.00px;">48,491,519</div>
<div class="t" style="top:614.13px;font-size:13px;color:#404040;right:1176.40px;">47.9%</div>
<div class="t" style="top:614.13px;font-size:13px;color:#404040;right:1040.00px;">9,918,389</div>
<div class="t" style="top:614.13px;font-size:13px;color:#404040;right:951.00px;">9,241,149</div>
<div class="t" style="top:614.13px;font-size:13px;color:#404040;right:862.00px;">9,160,533</div>
<div class="t" style="top:614.13px;font-size:13px;color:#404040;right:773.00px;">8,876,596</div>
<div class="t" style="top:614.13px;font-size:13px;color:#404040;right:684.00px;">9,620,141</div>
<div class="t" style="top:614.13px;font-size:13px;color:#404040;right:595.00px;">8,152,028</div>
<div class="t" style="top:614.13px;font-size:13px;color:#404040;right:501.50px;">(2,289,256)</div>
<div class="t" style="top:614.13px;font-size:13px;color:#404040;right:412.50px;">-</div>
<div class="t" style="top:614.13px;font-size:13px;color:#404040;right:323.50px;">-</div>
<div class="t" style="top:614.13px;font-size:13px;color:#404040;right:234.50px;">-</div>
<div class="t" style="top:614.13px;font-size:13px;color:#404040;right:145.50px;">-</div>
<div class="t" style="top:614.13px;font-size:13px;color:#404040;right:56.50px;">-</div>
<div class="t" style="top:634.32px;font-size:12.8px;color:#404040;left:61.20px;">Motor vehicle costs</div>
<svg class="r" style="left:306px;top:635px" width="14" height="14" viewBox="0 0 14 14"><g stroke="#ed7d31" stroke-width="1.2" fill="none"><rect x="2.8" y="2.8" width="7.8" height="7.8"/><path d="M0 6.85H13.5"/></g><path d="M6.85 0V13.5" stroke="#f2a77a" stroke-width="1.1" stroke-dasharray="1.6 1.2"/></svg>
<svg class="r" style="left:335px;top:636px" width="16" height="6" viewBox="0 0 16 6"><g fill="#00b050"><circle cx="1.9" cy="4.1" r="1.9"/><path d="M0.1 4.2 Q0.2 0.6 3.7 0 L3.8 0.9 Q2.1 1.5 2.2 3.2Z"/><circle cx="5.8" cy="4.1" r="1.9"/><path d="M4.0 4.2 Q4.1 0.6 7.6 0 L7.7 0.9 Q6.0 1.5 6.1 3.2Z"/><circle cx="10.2" cy="1.9" r="1.9"/><path d="M12.0 1.8 Q11.9 5.4 8.4 6 L8.3 5.1 Q10.0 4.5 9.9 2.8Z"/><circle cx="14.1" cy="1.9" r="1.9"/><path d="M15.9 1.8 Q15.8 5.4 12.3 6 L12.2 5.1 Q13.9 4.5 13.8 2.8Z"/></g></svg>
<div class="t" style="top:634.13px;font-size:13px;color:#404040;right:1459.00px;">96,627</div>
<div class="t" style="top:634.13px;font-size:13px;color:#404040;right:1356.00px;">73,302</div>
<div class="t" style="top:634.13px;font-size:13px;color:#404040;right:1248.50px;">(23,325)</div>
<div class="t" style="top:634.13px;font-size:13px;color:#404040;right:1175.20px;">(31.8%)</div>
<div class="t" style="top:634.13px;font-size:13px;color:#404040;right:1040.00px;">8,937</div>
<div class="t" style="top:634.13px;font-size:13px;color:#404040;right:951.00px;">14,740</div>
<div class="t" style="top:634.13px;font-size:13px;color:#404040;right:862.00px;">9,318</div>
<div class="t" style="top:634.13px;font-size:13px;color:#404040;right:773.00px;">21,052</div>
<div class="t" style="top:634.13px;font-size:13px;color:#404040;right:684.00px;">12,474</div>
<div class="t" style="top:634.13px;font-size:13px;color:#404040;right:595.00px;">13,041</div>
<div class="t" style="top:634.13px;font-size:13px;color:#404040;right:506.00px;">17,065</div>
<div class="t" style="top:634.13px;font-size:13px;color:#404040;right:412.50px;">-</div>
<div class="t" style="top:634.13px;font-size:13px;color:#404040;right:323.50px;">-</div>
<div class="t" style="top:634.13px;font-size:13px;color:#404040;right:234.50px;">-</div>
<div class="t" style="top:634.13px;font-size:13px;color:#404040;right:145.50px;">-</div>
<div class="t" style="top:634.13px;font-size:13px;color:#404040;right:56.50px;">-</div>
<div class="t" style="top:654.32px;font-size:12.8px;color:#404040;left:61.20px;">Travel and Entertainment</div>
<svg class="r" style="left:306px;top:655px" width="14" height="14" viewBox="0 0 14 14"><g stroke="#ed7d31" stroke-width="1.2" fill="none"><rect x="2.8" y="2.8" width="7.8" height="7.8"/><path d="M0 6.85H13.5"/></g><path d="M6.85 0V13.5" stroke="#f2a77a" stroke-width="1.1" stroke-dasharray="1.6 1.2"/></svg>
<svg class="r" style="left:335px;top:656px" width="16" height="6" viewBox="0 0 16 6"><g fill="#00b050"><circle cx="1.9" cy="4.1" r="1.9"/><path d="M0.1 4.2 Q0.2 0.6 3.7 0 L3.8 0.9 Q2.1 1.5 2.2 3.2Z"/><circle cx="5.8" cy="4.1" r="1.9"/><path d="M4.0 4.2 Q4.1 0.6 7.6 0 L7.7 0.9 Q6.0 1.5 6.1 3.2Z"/><circle cx="10.2" cy="1.9" r="1.9"/><path d="M12.0 1.8 Q11.9 5.4 8.4 6 L8.3 5.1 Q10.0 4.5 9.9 2.8Z"/><circle cx="14.1" cy="1.9" r="1.9"/><path d="M15.9 1.8 Q15.8 5.4 12.3 6 L12.2 5.1 Q13.9 4.5 13.8 2.8Z"/></g></svg>
<div class="t" style="top:654.13px;font-size:13px;color:#404040;right:1459.00px;">5,286,673</div>
<div class="t" style="top:654.13px;font-size:13px;color:#404040;right:1356.00px;">11,319,684</div>
<div class="t" style="top:654.13px;font-size:13px;color:#404040;right:1253.00px;">6,033,011</div>
<div class="t" style="top:654.13px;font-size:13px;color:#404040;right:1176.40px;">53.3%</div>
<div class="t" style="top:654.13px;font-size:13px;color:#404040;right:1040.00px;">750,064</div>
<div class="t" style="top:654.13px;font-size:13px;color:#404040;right:951.00px;">1,235,224</div>
<div class="t" style="top:654.13px;font-size:13px;color:#404040;right:862.00px;">981,529</div>
<div class="t" style="top:654.13px;font-size:13px;color:#404040;right:773.00px;">1,162,217</div>
<div class="t" style="top:654.13px;font-size:13px;color:#404040;right:684.00px;">829,953</div>
<div class="t" style="top:654.13px;font-size:13px;color:#404040;right:595.00px;">628,928</div>
<div class="t" style="top:654.13px;font-size:13px;color:#404040;right:501.50px;">(301,241)</div>
<div class="t" style="top:654.13px;font-size:13px;color:#404040;right:412.50px;">-</div>
<div class="t" style="top:654.13px;font-size:13px;color:#404040;right:323.50px;">-</div>
<div class="t" style="top:654.13px;font-size:13px;color:#404040;right:234.50px;">-</div>
<div class="t" style="top:654.13px;font-size:13px;color:#404040;right:145.50px;">-</div>
<div class="t" style="top:654.13px;font-size:13px;color:#404040;right:56.50px;">-</div>
<div class="t" style="top:674.32px;font-size:12.8px;color:#404040;left:61.20px;">Rent and Occupancy costs</div>
<svg class="r" style="left:306px;top:675px" width="14" height="14" viewBox="0 0 14 14"><g stroke="#ed7d31" stroke-width="1.2" fill="none"><rect x="2.8" y="2.8" width="7.8" height="7.8"/><path d="M0 6.85H13.5"/></g><path d="M6.85 0V13.5" stroke="#f2a77a" stroke-width="1.1" stroke-dasharray="1.6 1.2"/></svg>
<svg class="r" style="left:335px;top:676px" width="16" height="6" viewBox="0 0 16 6"><g fill="#00b050"><circle cx="1.9" cy="4.1" r="1.9"/><path d="M0.1 4.2 Q0.2 0.6 3.7 0 L3.8 0.9 Q2.1 1.5 2.2 3.2Z"/><circle cx="5.8" cy="4.1" r="1.9"/><path d="M4.0 4.2 Q4.1 0.6 7.6 0 L7.7 0.9 Q6.0 1.5 6.1 3.2Z"/><circle cx="10.2" cy="1.9" r="1.9"/><path d="M12.0 1.8 Q11.9 5.4 8.4 6 L8.3 5.1 Q10.0 4.5 9.9 2.8Z"/><circle cx="14.1" cy="1.9" r="1.9"/><path d="M15.9 1.8 Q15.8 5.4 12.3 6 L12.2 5.1 Q13.9 4.5 13.8 2.8Z"/></g></svg>
<div class="t" style="top:674.13px;font-size:13px;color:#404040;right:1459.00px;">2,969,394</div>
<div class="t" style="top:674.13px;font-size:13px;color:#404040;right:1356.00px;">6,071,351</div>
<div class="t" style="top:674.13px;font-size:13px;color:#404040;right:1253.00px;">3,101,957</div>
<div class="t" style="top:674.13px;font-size:13px;color:#404040;right:1176.40px;">51.1%</div>
<div class="t" style="top:674.13px;font-size:13px;color:#404040;right:1040.00px;">473,009</div>
<div class="t" style="top:674.13px;font-size:13px;color:#404040;right:951.00px;">499,859</div>
<div class="t" style="top:674.13px;font-size:13px;color:#404040;right:862.00px;">476,324</div>
<div class="t" style="top:674.13px;font-size:13px;color:#404040;right:773.00px;">421,081</div>
<div class="t" style="top:674.13px;font-size:13px;color:#404040;right:684.00px;">467,171</div>
<div class="t" style="top:674.13px;font-size:13px;color:#404040;right:595.00px;">546,005</div>
<div class="t" style="top:674.13px;font-size:13px;color:#404040;right:506.00px;">85,945</div>
<div class="t" style="top:674.13px;font-size:13px;color:#404040;right:412.50px;">-</div>
<div class="t" style="top:674.13px;font-size:13px;color:#404040;right:323.50px;">-</div>
<div class="t" style="top:674.13px;font-size:13px;color:#404040;right:234.50px;">-</div>
<div class="t" style="top:674.13px;font-size:13px;color:#404040;right:145.50px;">-</div>
<div class="t" style="top:674.13px;font-size:13px;color:#404040;right:56.50px;">-</div>
<div class="t" style="top:694.32px;font-size:12.8px;color:#404040;left:61.20px;">IT costs</div>
<svg class="r" style="left:306px;top:695px" width="14" height="14" viewBox="0 0 14 14"><g stroke="#ed7d31" stroke-width="1.2" fill="none"><rect x="2.8" y="2.8" width="7.8" height="7.8"/><path d="M0 6.85H13.5"/></g><path d="M6.85 0V13.5" stroke="#f2a77a" stroke-width="1.1" stroke-dasharray="1.6 1.2"/></svg>
<svg class="r" style="left:335px;top:696px" width="16" height="6" viewBox="0 0 16 6"><g fill="#00b050"><circle cx="1.9" cy="4.1" r="1.9"/><path d="M0.1 4.2 Q0.2 0.6 3.7 0 L3.8 0.9 Q2.1 1.5 2.2 3.2Z"/><circle cx="5.8" cy="4.1" r="1.9"/><path d="M4.0 4.2 Q4.1 0.6 7.6 0 L7.7 0.9 Q6.0 1.5 6.1 3.2Z"/><circle cx="10.2" cy="1.9" r="1.9"/><path d="M12.0 1.8 Q11.9 5.4 8.4 6 L8.3 5.1 Q10.0 4.5 9.9 2.8Z"/><circle cx="14.1" cy="1.9" r="1.9"/><path d="M15.9 1.8 Q15.8 5.4 12.3 6 L12.2 5.1 Q13.9 4.5 13.8 2.8Z"/></g></svg>
<div class="t" style="top:694.13px;font-size:13px;color:#404040;right:1459.00px;">1,065,236</div>
<div class="t" style="top:694.13px;font-size:13px;color:#404040;right:1356.00px;">3,065,992</div>
<div class="t" style="top:694.13px;font-size:13px;color:#404040;right:1253.00px;">2,000,756</div>
<div class="t" style="top:694.13px;font-size:13px;color:#404040;right:1176.40px;">65.3%</div>
<div class="t" style="top:694.13px;font-size:13px;color:#404040;right:1040.00px;">149,322</div>
<div class="t" style="top:694.13px;font-size:13px;color:#404040;right:951.00px;">184,167</div>
<div class="t" style="top:694.13px;font-size:13px;color:#404040;right:862.00px;">178,133</div>
<div class="t" style="top:694.13px;font-size:13px;color:#404040;right:773.00px;">166,665</div>
<div class="t" style="top:694.13px;font-size:13px;color:#404040;right:684.00px;">211,197</div>
<div class="t" style="top:694.13px;font-size:13px;color:#404040;right:595.00px;">118,753</div>
<div class="t" style="top:694.13px;font-size:13px;color:#404040;right:506.00px;">57,000</div>
<div class="t" style="top:694.13px;font-size:13px;color:#404040;right:412.50px;">-</div>
<div class="t" style="top:694.13px;font-size:13px;color:#404040;right:323.50px;">-</div>
<div class="t" style="top:694.13px;font-size:13px;color:#404040;right:234.50px;">-</div>
<div class="t" style="top:694.13px;font-size:13px;color:#404040;right:145.50px;">-</div>
<div class="t" style="top:694.13px;font-size:13px;color:#404040;right:56.50px;">-</div>
<div class="t" style="top:714.32px;font-size:12.8px;color:#404040;left:61.20px;">Office automation</div>
<svg class="r" style="left:306px;top:715px" width="14" height="14" viewBox="0 0 14 14"><g stroke="#ed7d31" stroke-width="1.2" fill="none"><rect x="2.8" y="2.8" width="7.8" height="7.8"/><path d="M0 6.85H13.5"/></g><path d="M6.85 0V13.5" stroke="#f2a77a" stroke-width="1.1" stroke-dasharray="1.6 1.2"/></svg>
<svg class="r" style="left:335px;top:716px" width="16" height="6" viewBox="0 0 16 6"><g fill="#00b050"><circle cx="1.9" cy="4.1" r="1.9"/><path d="M0.1 4.2 Q0.2 0.6 3.7 0 L3.8 0.9 Q2.1 1.5 2.2 3.2Z"/><circle cx="5.8" cy="4.1" r="1.9"/><path d="M4.0 4.2 Q4.1 0.6 7.6 0 L7.7 0.9 Q6.0 1.5 6.1 3.2Z"/><circle cx="10.2" cy="1.9" r="1.9"/><path d="M12.0 1.8 Q11.9 5.4 8.4 6 L8.3 5.1 Q10.0 4.5 9.9 2.8Z"/><circle cx="14.1" cy="1.9" r="1.9"/><path d="M15.9 1.8 Q15.8 5.4 12.3 6 L12.2 5.1 Q13.9 4.5 13.8 2.8Z"/></g></svg>
<div class="t" style="top:714.13px;font-size:13px;color:#404040;right:1459.00px;">88,003</div>
<div class="t" style="top:714.13px;font-size:13px;color:#404040;right:1356.00px;">91,000</div>
<div class="t" style="top:714.13px;font-size:13px;color:#404040;right:1253.00px;">2,997</div>
<div class="t" style="top:714.13px;font-size:13px;color:#404040;right:1176.40px;">3.3%</div>
<div class="t" style="top:714.13px;font-size:13px;color:#404040;right:1040.00px;">10,958</div>
<div class="t" style="top:714.13px;font-size:13px;color:#404040;right:951.00px;">24,128</div>
<div class="t" style="top:714.13px;font-size:13px;color:#404040;right:862.00px;">13,170</div>
<div class="t" style="top:714.13px;font-size:13px;color:#404040;right:773.00px;">13,170</div>
<div class="t" style="top:714.13px;font-size:13px;color:#404040;right:684.00px;">13,170</div>
<div class="t" style="top:714.13px;font-size:13px;color:#404040;right:595.00px;">13,170</div>
<div class="t" style="top:714.13px;font-size:13px;color:#404040;right:506.00px;">237</div>
<div class="t" style="top:714.13px;font-size:13px;color:#404040;right:412.50px;">-</div>
<div class="t" style="top:714.13px;font-size:13px;color:#404040;right:323.50px;">-</div>
<div class="t" style="top:714.13px;font-size:13px;color:#404040;right:234.50px;">-</div>
<div class="t" style="top:714.13px;font-size:13px;color:#404040;right:145.50px;">-</div>
<div class="t" style="top:714.13px;font-size:13px;color:#404040;right:56.50px;">-</div>
<div class="t" style="top:734.32px;font-size:12.8px;color:#404040;left:61.20px;">Telecommunications</div>
<svg class="r" style="left:306px;top:735px" width="14" height="14" viewBox="0 0 14 14"><g stroke="#ed7d31" stroke-width="1.2" fill="none"><rect x="2.8" y="2.8" width="7.8" height="7.8"/><path d="M0 6.85H13.5"/></g><path d="M6.85 0V13.5" stroke="#f2a77a" stroke-width="1.1" stroke-dasharray="1.6 1.2"/></svg>
<svg class="r" style="left:335px;top:736px" width="16" height="6" viewBox="0 0 16 6"><g fill="#00b050"><circle cx="1.9" cy="4.1" r="1.9"/><path d="M0.1 4.2 Q0.2 0.6 3.7 0 L3.8 0.9 Q2.1 1.5 2.2 3.2Z"/><circle cx="5.8" cy="4.1" r="1.9"/><path d="M4.0 4.2 Q4.1 0.6 7.6 0 L7.7 0.9 Q6.0 1.5 6.1 3.2Z"/><circle cx="10.2" cy="1.9" r="1.9"/><path d="M12.0 1.8 Q11.9 5.4 8.4 6 L8.3 5.1 Q10.0 4.5 9.9 2.8Z"/><circle cx="14.1" cy="1.9" r="1.9"/><path d="M15.9 1.8 Q15.8 5.4 12.3 6 L12.2 5.1 Q13.9 4.5 13.8 2.8Z"/></g></svg>
<div class="t" style="top:734.13px;font-size:13px;color:#404040;right:1459.00px;">488,684</div>
<div class="t" style="top:734.13px;font-size:13px;color:#404040;right:1356.00px;">1,107,520</div>
<div class="t" style="top:734.13px;font-size:13px;color:#404040;right:1253.00px;">618,836</div>
<div class="t" style="top:734.13px;font-size:13px;color:#404040;right:1176.40px;">55.9%</div>
<div class="t" style="top:734.13px;font-size:13px;color:#404040;right:1040.00px;">85,017</div>
<div class="t" style="top:734.13px;font-size:13px;color:#404040;right:951.00px;">95,111</div>
<div class="t" style="top:734.13px;font-size:13px;color:#404040;right:862.00px;">87,108</div>
<div class="t" style="top:734.13px;font-size:13px;color:#404040;right:773.00px;">40,214</div>
<div class="t" style="top:734.13px;font-size:13px;color:#404040;right:684.00px;">88,203</div>
<div class="t" style="top:734.13px;font-size:13px;color:#404040;right:595.00px;">44,688</div>
<div class="t" style="top:734.13px;font-size:13px;color:#404040;right:506.00px;">48,343</div>
<div class="t" style="top:734.13px;font-size:13px;color:#404040;right:412.50px;">-</div>
<div class="t" style="top:734.13px;font-size:13px;color:#404040;right:323.50px;">-</div>
<div class="t" style="top:734.13px;font-size:13px;color:#404040;right:234.50px;">-</div>
<div class="t" style="top:734.13px;font-size:13px;color:#404040;right:145.50px;">-</div>
<div class="t" style="top:734.13px;font-size:13px;color:#404040;right:56.50px;">-</div>
<div class="t" style="top:754.32px;font-size:12.8px;color:#404040;left:61.20px;">Staff welfare</div>
<svg class="r" style="left:306px;top:755px" width="14" height="14" viewBox="0 0 14 14"><g stroke="#ed7d31" stroke-width="1.2" fill="none"><rect x="2.8" y="2.8" width="7.8" height="7.8"/><path d="M0 6.85H13.5"/></g><path d="M6.85 0V13.5" stroke="#f2a77a" stroke-width="1.1" stroke-dasharray="1.6 1.2"/></svg>
<svg class="r" style="left:335px;top:756px" width="16" height="6" viewBox="0 0 16 6"><g fill="#00b050"><circle cx="1.9" cy="4.1" r="1.9"/><path d="M0.1 4.2 Q0.2 0.6 3.7 0 L3.8 0.9 Q2.1 1.5 2.2 3.2Z"/><circle cx="5.8" cy="4.1" r="1.9"/><path d="M4.0 4.2 Q4.1 0.6 7.6 0 L7.7 0.9 Q6.0 1.5 6.1 3.2Z"/><circle cx="10.2" cy="1.9" r="1.9"/><path d="M12.0 1.8 Q11.9 5.4 8.4 6 L8.3 5.1 Q10.0 4.5 9.9 2.8Z"/><circle cx="14.1" cy="1.9" r="1.9"/><path d="M15.9 1.8 Q15.8 5.4 12.3 6 L12.2 5.1 Q13.9 4.5 13.8 2.8Z"/></g></svg>
<div class="t" style="top:754.13px;font-size:13px;color:#404040;right:1459.00px;">110,149</div>
<div class="t" style="top:754.13px;font-size:13px;color:#404040;right:1356.00px;">175,621</div>
<div class="t" style="top:754.13px;font-size:13px;color:#404040;right:1253.00px;">65,472</div>
<div class="t" style="top:754.13px;font-size:13px;color:#404040;right:1176.40px;">37.3%</div>
<div class="t" style="top:754.13px;font-size:13px;color:#404040;right:1040.00px;">18,563</div>
<div class="t" style="top:754.13px;font-size:13px;color:#404040;right:951.00px;">19,598</div>
<div class="t" style="top:754.13px;font-size:13px;color:#404040;right:862.00px;">13,876</div>
<div class="t" style="top:754.13px;font-size:13px;color:#404040;right:773.00px;">15,805</div>
<div class="t" style="top:754.13px;font-size:13px;color:#404040;right:684.00px;">21,261</div>
<div class="t" style="top:754.13px;font-size:13px;color:#404040;right:595.00px;">16,736</div>
<div class="t" style="top:754.13px;font-size:13px;color:#404040;right:506.00px;">4,313</div>
<div class="t" style="top:754.13px;font-size:13px;color:#404040;right:412.50px;">-</div>
<div class="t" style="top:754.13px;font-size:13px;color:#404040;right:323.50px;">-</div>
<div class="t" style="top:754.13px;font-size:13px;color:#404040;right:234.50px;">-</div>
<div class="t" style="top:754.13px;font-size:13px;color:#404040;right:145.50px;">-</div>
<div class="t" style="top:754.13px;font-size:13px;color:#404040;right:56.50px;">-</div>
<div class="t" style="top:774.32px;font-size:12.8px;color:#404040;left:61.20px;">Marketing costs</div>
<svg class="r" style="left:306px;top:775px" width="14" height="14" viewBox="0 0 14 14"><g stroke="#ed7d31" stroke-width="1.2" fill="none"><rect x="2.8" y="2.8" width="7.8" height="7.8"/><path d="M0 6.85H13.5"/></g><path d="M6.85 0V13.5" stroke="#f2a77a" stroke-width="1.1" stroke-dasharray="1.6 1.2"/></svg>
<svg class="r" style="left:335px;top:776px" width="16" height="6" viewBox="0 0 16 6"><g fill="#00b050"><circle cx="1.9" cy="4.1" r="1.9"/><path d="M0.1 4.2 Q0.2 0.6 3.7 0 L3.8 0.9 Q2.1 1.5 2.2 3.2Z"/><circle cx="5.8" cy="4.1" r="1.9"/><path d="M4.0 4.2 Q4.1 0.6 7.6 0 L7.7 0.9 Q6.0 1.5 6.1 3.2Z"/><circle cx="10.2" cy="1.9" r="1.9"/><path d="M12.0 1.8 Q11.9 5.4 8.4 6 L8.3 5.1 Q10.0 4.5 9.9 2.8Z"/><circle cx="14.1" cy="1.9" r="1.9"/><path d="M15.9 1.8 Q15.8 5.4 12.3 6 L12.2 5.1 Q13.9 4.5 13.8 2.8Z"/></g></svg>
<div class="t" style="top:774.13px;font-size:13px;color:#404040;right:1459.00px;">4,708,062</div>
<div class="t" style="top:774.13px;font-size:13px;color:#404040;right:1356.00px;">7,383,425</div>
<div class="t" style="top:774.13px;font-size:13px;color:#404040;right:1253.00px;">2,675,363</div>
<div class="t" style="top:774.13px;font-size:13px;color:#404040;right:1176.40px;">36.2%</div>
<div class="t" style="top:774.13px;font-size:13px;color:#404040;right:1040.00px;">1,195,474</div>
<div class="t" style="top:774.13px;font-size:13px;color:#404040;right:951.00px;">979,669</div>
<div class="t" style="top:774.13px;font-size:13px;color:#404040;right:862.00px;">861,657</div>
<div class="t" style="top:774.13px;font-size:13px;color:#404040;right:773.00px;">933,799</div>
<div class="t" style="top:774.13px;font-size:13px;color:#404040;right:684.00px;">463,242</div>
<div class="t" style="top:774.13px;font-size:13px;color:#404040;right:595.00px;">309,010</div>
<div class="t" style="top:774.13px;font-size:13px;color:#404040;right:501.50px;">(34,787)</div>
<div class="t" style="top:774.13px;font-size:13px;color:#404040;right:412.50px;">-</div>
<div class="t" style="top:774.13px;font-size:13px;color:#404040;right:323.50px;">-</div>
<div class="t" style="top:774.13px;font-size:13px;color:#404040;right:234.50px;">-</div>
<div class="t" style="top:774.13px;font-size:13px;color:#404040;right:145.50px;">-</div>
<div class="t" style="top:774.13px;font-size:13px;color:#404040;right:56.50px;">-</div>
<div class="t" style="top:794.32px;font-size:12.8px;color:#404040;left:61.20px;">Agency costs</div>
<svg class="r" style="left:306px;top:795px" width="14" height="14" viewBox="0 0 14 14"><g stroke="#ed7d31" stroke-width="1.2" fill="none"><rect x="2.8" y="2.8" width="7.8" height="7.8"/><path d="M0 6.85H13.5"/></g><path d="M6.85 0V13.5" stroke="#f2a77a" stroke-width="1.1" stroke-dasharray="1.6 1.2"/></svg>
<svg class="r" style="left:335px;top:796px" width="16" height="6" viewBox="0 0 16 6"><g fill="#00b050"><circle cx="1.9" cy="4.1" r="1.9"/><path d="M0.1 4.2 Q0.2 0.6 3.7 0 L3.8 0.9 Q2.1 1.5 2.2 3.2Z"/><circle cx="5.8" cy="4.1" r="1.9"/><path d="M4.0 4.2 Q4.1 0.6 7.6 0 L7.7 0.9 Q6.0 1.5 6.1 3.2Z"/><circle cx="10.2" cy="1.9" r="1.9"/><path d="M12.0 1.8 Q11.9 5.4 8.4 6 L8.3 5.1 Q10.0 4.5 9.9 2.8Z"/><circle cx="14.1" cy="1.9" r="1.9"/><path d="M15.9 1.8 Q15.8 5.4 12.3 6 L12.2 5.1 Q13.9 4.5 13.8 2.8Z"/></g></svg>
<div class="t" style="top:794.13px;font-size:13px;color:#404040;right:1459.00px;">2,555,170</div>
<div class="t" style="top:794.13px;font-size:13px;color:#404040;right:1356.00px;">1,307,875</div>
<div class="t" style="top:794.13px;font-size:13px;color:#404040;right:1248.50px;">(1,247,295)</div>
<div class="t" style="top:794.13px;font-size:13px;color:#404040;right:1175.20px;">(95.4%)</div>
<div class="t" style="top:794.13px;font-size:13px;color:#404040;right:1040.00px;">77,834</div>
<div class="t" style="top:794.13px;font-size:13px;color:#404040;right:951.00px;">503,940</div>
<div class="t" style="top:794.13px;font-size:13px;color:#404040;right:862.00px;">421,415</div>
<div class="t" style="top:794.13px;font-size:13px;color:#404040;right:773.00px;">397,996</div>
<div class="t" style="top:794.13px;font-size:13px;color:#404040;right:684.00px;">452,267</div>
<div class="t" style="top:794.13px;font-size:13px;color:#404040;right:595.00px;">701,718</div>
<div class="t" style="top:794.13px;font-size:13px;color:#404040;right:501.50px;">-</div>
<div class="t" style="top:794.13px;font-size:13px;color:#404040;right:412.50px;">-</div>
<div class="t" style="top:794.13px;font-size:13px;color:#404040;right:323.50px;">-</div>
<div class="t" style="top:794.13px;font-size:13px;color:#404040;right:234.50px;">-</div>
<div class="t" style="top:794.13px;font-size:13px;color:#404040;right:145.50px;">-</div>
<div class="t" style="top:794.13px;font-size:13px;color:#404040;right:56.50px;">-</div>
<div class="t" style="top:814.32px;font-size:12.8px;color:#404040;left:61.20px;">General expenses</div>
<svg class="r" style="left:306px;top:815px" width="14" height="14" viewBox="0 0 14 14"><g stroke="#ed7d31" stroke-width="1.2" fill="none"><rect x="2.8" y="2.8" width="7.8" height="7.8"/><path d="M0 6.85H13.5"/></g><path d="M6.85 0V13.5" stroke="#f2a77a" stroke-width="1.1" stroke-dasharray="1.6 1.2"/></svg>
<svg class="r" style="left:335px;top:816px" width="16" height="6" viewBox="0 0 16 6"><g fill="#00b050"><circle cx="1.9" cy="4.1" r="1.9"/><path d="M0.1 4.2 Q0.2 0.6 3.7 0 L3.8 0.9 Q2.1 1.5 2.2 3.2Z"/><circle cx="5.8" cy="4.1" r="1.9"/><path d="M4.0 4.2 Q4.1 0.6 7.6 0 L7.7 0.9 Q6.0 1.5 6.1 3.2Z"/><circle cx="10.2" cy="1.9" r="1.9"/><path d="M12.0 1.8 Q11.9 5.4 8.4 6 L8.3 5.1 Q10.0 4.5 9.9 2.8Z"/><circle cx="14.1" cy="1.9" r="1.9"/><path d="M15.9 1.8 Q15.8 5.4 12.3 6 L12.2 5.1 Q13.9 4.5 13.8 2.8Z"/></g></svg>
<div class="t" style="top:814.13px;font-size:13px;color:#404040;right:1459.00px;">4,934,100</div>
<div class="t" style="top:814.13px;font-size:13px;color:#404040;right:1356.00px;">14,510,985</div>
<div class="t" style="top:814.13px;font-size:13px;color:#404040;right:1253.00px;">9,576,885</div>
<div class="t" style="top:814.13px;font-size:13px;color:#404040;right:1176.40px;">66.0%</div>
<div class="t" style="top:814.13px;font-size:13px;color:#404040;right:1040.00px;">1,555,353</div>
<div class="t" style="top:814.13px;font-size:13px;color:#404040;right:951.00px;">1,035,455</div>
<div class="t" style="top:814.13px;font-size:13px;color:#404040;right:862.00px;">1,556,371</div>
<div class="t" style="top:814.13px;font-size:13px;color:#404040;right:773.00px;">957,089</div>
<div class="t" style="top:814.13px;font-size:13px;color:#404040;right:684.00px;">1,221,843</div>
<div class="t" style="top:814.13px;font-size:13px;color:#404040;right:595.00px;">5,979,480</div>
<div class="t" style="top:814.13px;font-size:13px;color:#404040;right:501.50px;">(7,371,493)</div>
<div class="t" style="top:814.13px;font-size:13px;color:#404040;right:412.50px;">-</div>
<div class="t" style="top:814.13px;font-size:13px;color:#404040;right:323.50px;">-</div>
<div class="t" style="top:814.13px;font-size:13px;color:#404040;right:234.50px;">-</div>
<div class="t" style="top:814.13px;font-size:13px;color:#404040;right:145.50px;">-</div>
<div class="t" style="top:814.13px;font-size:13px;color:#404040;right:56.50px;">-</div>
<div class="t" style="top:834.32px;font-size:12.8px;color:#404040;left:61.20px;">Corporate recharge</div>
<svg class="r" style="left:306px;top:835px" width="14" height="14" viewBox="0 0 14 14"><g stroke="#ed7d31" stroke-width="1.2" fill="none"><rect x="2.8" y="2.8" width="7.8" height="7.8"/><path d="M0 6.85H13.5"/></g><path d="M6.85 0V13.5" stroke="#f2a77a" stroke-width="1.1" stroke-dasharray="1.6 1.2"/></svg>
<svg class="r" style="left:335px;top:836px" width="16" height="6" viewBox="0 0 16 6"><g fill="#00b050"><circle cx="1.9" cy="4.1" r="1.9"/><path d="M0.1 4.2 Q0.2 0.6 3.7 0 L3.8 0.9 Q2.1 1.5 2.2 3.2Z"/><circle cx="5.8" cy="4.1" r="1.9"/><path d="M4.0 4.2 Q4.1 0.6 7.6 0 L7.7 0.9 Q6.0 1.5 6.1 3.2Z"/><circle cx="10.2" cy="1.9" r="1.9"/><path d="M12.0 1.8 Q11.9 5.4 8.4 6 L8.3 5.1 Q10.0 4.5 9.9 2.8Z"/><circle cx="14.1" cy="1.9" r="1.9"/><path d="M15.9 1.8 Q15.8 5.4 12.3 6 L12.2 5.1 Q13.9 4.5 13.8 2.8Z"/></g></svg>
<div class="t" style="top:834.13px;font-size:13px;color:#404040;right:1459.00px;">51,339</div>
<div class="t" style="top:834.13px;font-size:13px;color:#404040;right:1351.50px;">(1,826,234)</div>
<div class="t" style="top:834.13px;font-size:13px;color:#404040;right:1248.50px;">(1,877,572)</div>
<div class="t" style="top:834.13px;font-size:13px;color:#404040;right:1175.20px;">(102.8%)</div>
<div class="t" style="top:834.13px;font-size:13px;color:#404040;right:1040.00px;">10,220</div>
<div class="t" style="top:834.13px;font-size:13px;color:#404040;right:951.00px;">7,886</div>
<div class="t" style="top:834.13px;font-size:13px;color:#404040;right:862.00px;">3,567</div>
<div class="t" style="top:834.13px;font-size:13px;color:#404040;right:773.00px;">4,848</div>
<div class="t" style="top:834.13px;font-size:13px;color:#404040;right:684.00px;">6,265</div>
<div class="t" style="top:834.13px;font-size:13px;color:#404040;right:595.00px;">10,436</div>
<div class="t" style="top:834.13px;font-size:13px;color:#404040;right:506.00px;">8,115</div>
<div class="t" style="top:834.13px;font-size:13px;color:#404040;right:412.50px;">-</div>
<div class="t" style="top:834.13px;font-size:13px;color:#404040;right:323.50px;">-</div>
<div class="t" style="top:834.13px;font-size:13px;color:#404040;right:234.50px;">-</div>
<div class="t" style="top:834.13px;font-size:13px;color:#404040;right:145.50px;">-</div>
<div class="t" style="top:834.13px;font-size:13px;color:#404040;right:56.50px;">-</div>
<div class="t" style="top:854.32px;font-size:12.8px;color:#404040;left:61.20px;">Loss / (Profit) on disposal of assets</div>
<svg class="r" style="left:306px;top:855px" width="14" height="14" viewBox="0 0 14 14"><g stroke="#ed7d31" stroke-width="1.2" fill="none"><rect x="2.8" y="2.8" width="7.8" height="7.8"/><path d="M0 6.85H13.5"/></g><path d="M6.85 0V13.5" stroke="#f2a77a" stroke-width="1.1" stroke-dasharray="1.6 1.2"/></svg>
<svg class="r" style="left:335px;top:856px" width="16" height="6" viewBox="0 0 16 6"><g fill="#00b050"><circle cx="1.9" cy="4.1" r="1.9"/><path d="M0.1 4.2 Q0.2 0.6 3.7 0 L3.8 0.9 Q2.1 1.5 2.2 3.2Z"/><circle cx="5.8" cy="4.1" r="1.9"/><path d="M4.0 4.2 Q4.1 0.6 7.6 0 L7.7 0.9 Q6.0 1.5 6.1 3.2Z"/><circle cx="10.2" cy="1.9" r="1.9"/><path d="M12.0 1.8 Q11.9 5.4 8.4 6 L8.3 5.1 Q10.0 4.5 9.9 2.8Z"/><circle cx="14.1" cy="1.9" r="1.9"/><path d="M15.9 1.8 Q15.8 5.4 12.3 6 L12.2 5.1 Q13.9 4.5 13.8 2.8Z"/></g></svg>
<div class="t" style="top:854.13px;font-size:13px;color:#404040;right:1459.00px;">113,470</div>
<div class="t" style="top:854.13px;font-size:13px;color:#404040;right:1356.00px;">210,989</div>
<div class="t" style="top:854.13px;font-size:13px;color:#404040;right:1253.00px;">97,519</div>
<div class="t" style="top:854.13px;font-size:13px;color:#404040;right:1176.40px;">46.2%</div>
<div class="t" style="top:854.13px;font-size:13px;color:#404040;right:1035.50px;">(8,500)</div>
<div class="t" style="top:854.13px;font-size:13px;color:#404040;right:946.50px;">-</div>
<div class="t" style="top:854.13px;font-size:13px;color:#404040;right:862.00px;">7,263</div>
<div class="t" style="top:854.13px;font-size:13px;color:#404040;right:768.50px;">(7,263)</div>
<div class="t" style="top:854.13px;font-size:13px;color:#404040;right:684.00px;">120,742</div>
<div class="t" style="top:854.13px;font-size:13px;color:#404040;right:595.00px;">1,228</div>
<div class="t" style="top:854.13px;font-size:13px;color:#404040;right:501.50px;">-</div>
<div class="t" style="top:854.13px;font-size:13px;color:#404040;right:412.50px;">-</div>
<div class="t" style="top:854.13px;font-size:13px;color:#404040;right:323.50px;">-</div>
<div class="t" style="top:854.13px;font-size:13px;color:#404040;right:234.50px;">-</div>
<div class="t" style="top:854.13px;font-size:13px;color:#404040;right:145.50px;">-</div>
<div class="t" style="top:854.13px;font-size:13px;color:#404040;right:56.50px;">-</div>
<div class="t" style="top:874.32px;font-size:12.8px;color:#404040;left:61.20px;">Realised FX Gain/Loss</div>
<svg class="r" style="left:306px;top:875px" width="14" height="14" viewBox="0 0 14 14"><g stroke="#ed7d31" stroke-width="1.2" fill="none"><rect x="2.8" y="2.8" width="7.8" height="7.8"/><path d="M0 6.85H13.5"/></g><path d="M6.85 0V13.5" stroke="#f2a77a" stroke-width="1.1" stroke-dasharray="1.6 1.2"/></svg>
<svg class="r" style="left:335px;top:876px" width="16" height="6" viewBox="0 0 16 6"><g fill="#00b050"><circle cx="1.9" cy="4.1" r="1.9"/><path d="M0.1 4.2 Q0.2 0.6 3.7 0 L3.8 0.9 Q2.1 1.5 2.2 3.2Z"/><circle cx="5.8" cy="4.1" r="1.9"/><path d="M4.0 4.2 Q4.1 0.6 7.6 0 L7.7 0.9 Q6.0 1.5 6.1 3.2Z"/><circle cx="10.2" cy="1.9" r="1.9"/><path d="M12.0 1.8 Q11.9 5.4 8.4 6 L8.3 5.1 Q10.0 4.5 9.9 2.8Z"/><circle cx="14.1" cy="1.9" r="1.9"/><path d="M15.9 1.8 Q15.8 5.4 12.3 6 L12.2 5.1 Q13.9 4.5 13.8 2.8Z"/></g></svg>
<div class="t" style="top:874.13px;font-size:13px;color:#404040;right:1454.50px;">(1,630,208)</div>
<div class="t" style="top:874.13px;font-size:13px;color:#404040;right:1356.00px;">123,056</div>
<div class="t" style="top:874.13px;font-size:13px;color:#404040;right:1253.00px;">1,753,264</div>
<div class="t" style="top:874.13px;font-size:13px;color:#404040;right:1176.40px;">1,424.8%</div>
<div class="t" style="top:874.13px;font-size:13px;color:#404040;right:1035.50px;">(945,450)</div>
<div class="t" style="top:874.13px;font-size:13px;color:#404040;right:946.50px;">(107,919)</div>
<div class="t" style="top:874.13px;font-size:13px;color:#404040;right:857.50px;">(171,472)</div>
<div class="t" style="top:874.13px;font-size:13px;color:#404040;right:768.50px;">(588,659)</div>
<div class="t" style="top:874.13px;font-size:13px;color:#404040;right:684.00px;">26,787</div>
<div class="t" style="top:874.13px;font-size:13px;color:#404040;right:595.00px;">172,858</div>
<div class="t" style="top:874.13px;font-size:13px;color:#404040;right:501.50px;">(16,353)</div>
<div class="t" style="top:874.13px;font-size:13px;color:#404040;right:412.50px;">-</div>
<div class="t" style="top:874.13px;font-size:13px;color:#404040;right:323.50px;">-</div>
<div class="t" style="top:874.13px;font-size:13px;color:#404040;right:234.50px;">-</div>
<div class="t" style="top:874.13px;font-size:13px;color:#404040;right:145.50px;">-</div>
<div class="t" style="top:874.13px;font-size:13px;color:#404040;right:56.50px;">-</div>
<div class="t" style="top:893.77px;font-size:13.4px;color:#404040;font-weight:bold;left:52.50px;">Total overheads</div>
<svg class="r" style="left:306px;top:895px" width="14" height="14" viewBox="0 0 14 14"><g stroke="#ed7d31" stroke-width="1.2" fill="none"><rect x="2.8" y="2.8" width="7.8" height="7.8"/><path d="M0 6.85H13.5"/></g><path d="M6.85 0V13.5" stroke="#f2a77a" stroke-width="1.1" stroke-dasharray="1.6 1.2"/></svg>
<svg class="r" style="left:335px;top:896px" width="16" height="6" viewBox="0 0 16 6"><g fill="#00b050"><circle cx="1.9" cy="4.1" r="1.9"/><path d="M0.1 4.2 Q0.2 0.6 3.7 0 L3.8 0.9 Q2.1 1.5 2.2 3.2Z"/><circle cx="5.8" cy="4.1" r="1.9"/><path d="M4.0 4.2 Q4.1 0.6 7.6 0 L7.7 0.9 Q6.0 1.5 6.1 3.2Z"/><circle cx="10.2" cy="1.9" r="1.9"/><path d="M12.0 1.8 Q11.9 5.4 8.4 6 L8.3 5.1 Q10.0 4.5 9.9 2.8Z"/><circle cx="14.1" cy="1.9" r="1.9"/><path d="M15.9 1.8 Q15.8 5.4 12.3 6 L12.2 5.1 Q13.9 4.5 13.8 2.8Z"/></g></svg>
<div class="t" style="top:894.13px;font-size:13px;color:#404040;font-weight:bold;right:1459.00px;">73,516,279</div>
<div class="t" style="top:894.13px;font-size:13px;color:#404040;font-weight:bold;right:1356.00px;">145,498,992</div>
<div class="t" style="top:894.13px;font-size:13px;color:#404040;font-weight:bold;right:1253.00px;">71,982,713</div>
<div class="t" style="top:894.13px;font-size:13px;color:#404040;font-weight:bold;right:1176.40px;">49.5%</div>
<div class="t" style="top:894.13px;font-size:13px;color:#404040;font-weight:bold;right:1040.00px;">13,299,189</div>
<div class="t" style="top:894.13px;font-size:13px;color:#404040;font-weight:bold;right:951.00px;">13,733,007</div>
<div class="t" style="top:894.13px;font-size:13px;color:#404040;font-weight:bold;right:862.00px;">13,598,790</div>
<div class="t" style="top:894.13px;font-size:13px;color:#404040;font-weight:bold;right:773.00px;">12,414,608</div>
<div class="t" style="top:894.13px;font-size:13px;color:#404040;font-weight:bold;right:684.00px;">13,554,717</div>
<div class="t" style="top:894.13px;font-size:13px;color:#404040;font-weight:bold;right:595.00px;">16,708,080</div>
<div class="t" style="top:894.13px;font-size:13px;color:#404040;font-weight:bold;right:501.50px;">(9,792,112)</div>
<div class="t" style="top:894.13px;font-size:13px;color:#404040;right:412.50px;">-</div>
<div class="t" style="top:894.13px;font-size:13px;color:#404040;right:323.50px;">-</div>
<div class="t" style="top:894.13px;font-size:13px;color:#404040;right:234.50px;">-</div>
<div class="t" style="top:894.13px;font-size:13px;color:#404040;right:145.50px;">-</div>
<div class="t" style="top:894.13px;font-size:13px;color:#404040;right:56.50px;">-</div>
<div class="t" style="top:934.32px;font-size:12.8px;color:#404040;left:61.20px;">Allocations</div>
<svg class="r" style="left:306px;top:935px" width="14" height="14" viewBox="0 0 14 14"><g stroke="#ed7d31" stroke-width="1.2" fill="none"><rect x="2.8" y="2.8" width="7.8" height="7.8"/><path d="M0 6.85H13.5"/></g><path d="M6.85 0V13.5" stroke="#f2a77a" stroke-width="1.1" stroke-dasharray="1.6 1.2"/></svg>
<svg class="r" style="left:335px;top:936px" width="16" height="6" viewBox="0 0 16 6"><g fill="#00b050"><circle cx="1.9" cy="4.1" r="1.9"/><path d="M0.1 4.2 Q0.2 0.6 3.7 0 L3.8 0.9 Q2.1 1.5 2.2 3.2Z"/><circle cx="5.8" cy="4.1" r="1.9"/><path d="M4.0 4.2 Q4.1 0.6 7.6 0 L7.7 0.9 Q6.0 1.5 6.1 3.2Z"/><circle cx="10.2" cy="1.9" r="1.9"/><path d="M12.0 1.8 Q11.9 5.4 8.4 6 L8.3 5.1 Q10.0 4.5 9.9 2.8Z"/><circle cx="14.1" cy="1.9" r="1.9"/><path d="M15.9 1.8 Q15.8 5.4 12.3 6 L12.2 5.1 Q13.9 4.5 13.8 2.8Z"/></g></svg>
<div class="t" style="top:934.13px;font-size:13px;color:#404040;right:1454.50px;">-</div>
<div class="t" style="top:934.13px;font-size:13px;color:#404040;right:1351.50px;">-</div>
<div class="t" style="top:934.13px;font-size:13px;color:#404040;right:1248.50px;">-</div>
<div class="t" style="top:934.13px;font-size:13px;color:#404040;right:1176.40px;">0.0%</div>
<div class="t" style="top:934.13px;font-size:13px;color:#404040;right:1035.50px;">-</div>
<div class="t" style="top:934.13px;font-size:13px;color:#404040;right:946.50px;">-</div>
<div class="t" style="top:934.13px;font-size:13px;color:#404040;right:857.50px;">-</div>
<div class="t" style="top:934.13px;font-size:13px;color:#404040;right:768.50px;">-</div>
<div class="t" style="top:934.13px;font-size:13px;color:#404040;right:679.50px;">-</div>
<div class="t" style="top:934.13px;font-size:13px;color:#404040;right:590.50px;">-</div>
<div class="t" style="top:934.13px;font-size:13px;color:#404040;right:501.50px;">-</div>
<div class="t" style="top:934.13px;font-size:13px;color:#404040;right:412.50px;">-</div>
<div class="t" style="top:934.13px;font-size:13px;color:#404040;right:323.50px;">-</div>
<div class="t" style="top:934.13px;font-size:13px;color:#404040;right:234.50px;">-</div>
<div class="t" style="top:934.13px;font-size:13px;color:#404040;right:145.50px;">-</div>
<div class="t" style="top:934.13px;font-size:13px;color:#404040;right:56.50px;">-</div>
<div class="t" style="top:962.77px;font-size:13.4px;color:#404040;font-weight:bold;left:52.50px;">EBITDA</div>
<svg class="r" style="left:306px;top:964px" width="14" height="14" viewBox="0 0 14 14"><g stroke="#ed7d31" stroke-width="1.2" fill="none"><rect x="2.8" y="2.8" width="7.8" height="7.8"/><path d="M0 6.85H13.5"/></g><path d="M6.85 0V13.5" stroke="#f2a77a" stroke-width="1.1" stroke-dasharray="1.6 1.2"/></svg>
<svg class="r" style="left:335px;top:965px" width="16" height="6" viewBox="0 0 16 6"><g fill="#00b050"><circle cx="1.9" cy="4.1" r="1.9"/><path d="M0.1 4.2 Q0.2 0.6 3.7 0 L3.8 0.9 Q2.1 1.5 2.2 3.2Z"/><circle cx="5.8" cy="4.1" r="1.9"/><path d="M4.0 4.2 Q4.1 0.6 7.6 0 L7.7 0.9 Q6.0 1.5 6.1 3.2Z"/><circle cx="10.2" cy="1.9" r="1.9"/><path d="M12.0 1.8 Q11.9 5.4 8.4 6 L8.3 5.1 Q10.0 4.5 9.9 2.8Z"/><circle cx="14.1" cy="1.9" r="1.9"/><path d="M15.9 1.8 Q15.8 5.4 12.3 6 L12.2 5.1 Q13.9 4.5 13.8 2.8Z"/></g></svg>
<div class="t" style="top:963.13px;font-size:13px;color:#404040;font-weight:bold;right:1459.00px;">44,270,571</div>
<div class="t" style="top:963.13px;font-size:13px;color:#404040;font-weight:bold;right:1356.00px;">63,524,155</div>
<div class="t" style="top:963.13px;font-size:13px;color:#404040;font-weight:bold;right:1248.50px;">(19,253,583)</div>
<div class="t" style="top:963.13px;font-size:13px;color:#404040;right:1175.20px;">(30.3%)</div>
<div class="t" style="top:963.13px;font-size:13px;color:#404040;font-weight:bold;right:1040.00px;">1,709,597</div>
<div class="t" style="top:963.13px;font-size:13px;color:#404040;font-weight:bold;right:951.00px;">5,663,292</div>
<div class="t" style="top:963.13px;font-size:13px;color:#404040;font-weight:bold;right:862.00px;">4,010,294</div>
<div class="t" style="top:963.13px;font-size:13px;color:#404040;font-weight:bold;right:773.00px;">4,782,950</div>
<div class="t" style="top:963.13px;font-size:13px;color:#404040;font-weight:bold;right:684.00px;">8,670,908</div>
<div class="t" style="top:963.13px;font-size:13px;color:#404040;font-weight:bold;right:595.00px;">1,675,454</div>
<div class="t" style="top:963.13px;font-size:13px;color:#404040;font-weight:bold;right:506.00px;">17,758,077</div>
<div class="t" style="top:963.13px;font-size:13px;color:#404040;right:412.50px;">-</div>
<div class="t" style="top:963.13px;font-size:13px;color:#404040;right:323.50px;">-</div>
<div class="t" style="top:963.13px;font-size:13px;color:#404040;right:234.50px;">-</div>
<div class="t" style="top:963.13px;font-size:13px;color:#404040;right:145.50px;">-</div>
<div class="t" style="top:963.13px;font-size:13px;color:#404040;right:56.50px;">-</div>
</body></html>
